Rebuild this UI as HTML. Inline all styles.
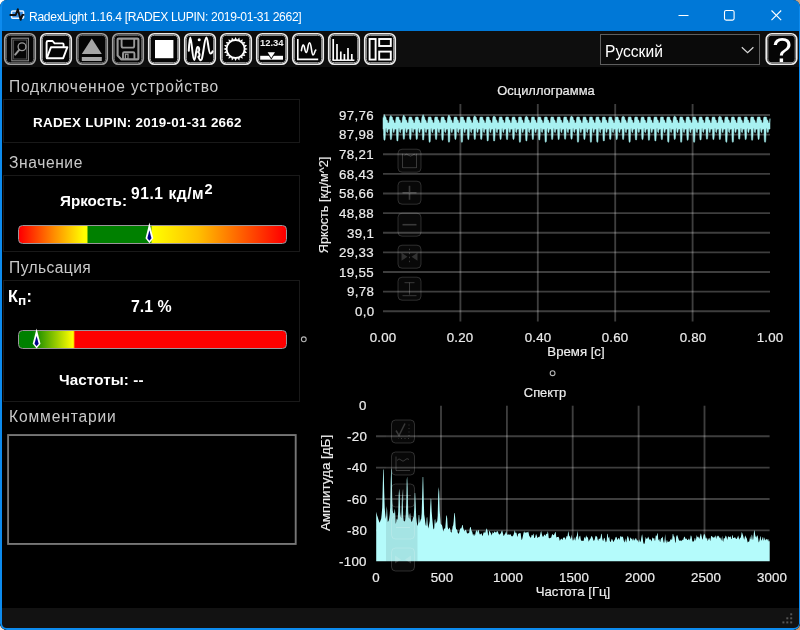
<!DOCTYPE html>
<html><head><meta charset="utf-8"><title>RadexLight</title>
<style>
html,body{margin:0;padding:0;background:#fff;}
body{width:800px;height:630px;overflow:hidden;position:relative;font-family:"Liberation Sans",sans-serif;}
#win{position:absolute;left:0;top:0;width:800px;height:630px;box-sizing:border-box;background:#000;border-radius:7px 7px 7px 7px;overflow:hidden;}
#win:after{content:"";position:absolute;left:0;top:0;right:0;bottom:0;border:solid #0d8bee;border-width:0 1px 2px 2px;border-radius:7px 7px 6.5px 6.5px;pointer-events:none;box-sizing:border-box;}
#title{position:absolute;left:0;top:0;width:800px;height:31px;background:#0078d7;}
#title .t{position:absolute;left:29px;top:10.2px;font-size:12.1px;line-height:14px;color:#fff;white-space:pre;letter-spacing:-0.32px;}
#tool{position:absolute;left:0;top:31px;width:800px;height:36px;background:#0e0e0e;}
#status{position:absolute;left:0;top:608px;width:800px;height:22px;background:#121212;}
.h{position:absolute;left:9px;color:#c9c9c9;font-size:15.6px;line-height:20px;white-space:pre;letter-spacing:0.72px;}
.gb{position:absolute;left:3px;width:297px;box-sizing:border-box;border:1px solid #191919;}
.b{position:absolute;color:#fff;font-weight:bold;white-space:pre;line-height:18px;}
.bar{position:absolute;left:17.6px;width:269.2px;height:19px;box-sizing:border-box;border:1.5px solid #9a959a;border-radius:4.5px;background-origin:border-box;}
#combo{position:absolute;left:600px;top:33.5px;width:159.5px;height:31.5px;box-sizing:border-box;border:1px solid #5e5e5e;background:#0a0a0a;}
#combo span{position:absolute;left:3.6px;top:8.2px;font-size:15.6px;line-height:18px;color:#fff;}
#help{position:absolute;left:765.5px;top:33px;width:32px;height:32px;}
#ta{display:none}
.cl,.ct,.rot,.h,.b,#title .t,#combo span{will-change:transform;}
.cl{position:absolute;-webkit-text-stroke:0.2px #ececec;color:#ececec;font-size:13.3px;line-height:16px;white-space:pre;letter-spacing:0.1px;}
.yl{text-align:right;}
.xl{width:60px;text-align:center;}
.ct{position:absolute;-webkit-text-stroke:0.2px #ececec;color:#ececec;font-size:12.9px;line-height:16px;white-space:pre;width:200px;text-align:center;}
.rot{position:absolute;-webkit-text-stroke:0.2px #ececec;color:#ececec;font-size:13px;line-height:16px;white-space:pre;width:200px;height:16px;text-align:center;transform:rotate(-90deg);transform-origin:center center;}
svg{position:absolute;left:0;top:0;}
</style></head><body>
<div style="position:absolute;right:0;top:0;width:8px;height:8px;background:#c9a585"></div><div style="position:absolute;right:0;bottom:0;width:8px;height:8px;background:#c99a70"></div><div style="position:absolute;left:0;bottom:0;width:8px;height:8px;background:#f3e6da"></div>
<div id="win">
<div id="title"><div class="t">RadexLight 1.16.4 [RADEX LUPIN: 2019-01-31 2662]</div></div>
<div id="tool"></div>
<div id="status"></div>

<div class="h" style="top:76.6px;letter-spacing:0.78px">Подключенное устройство</div>
<div class="gb" style="top:99px;height:44px"></div>
<div class="b" style="left:33px;top:113.6px;font-size:13.4px;letter-spacing:0.28px">RADEX LUPIN: 2019-01-31 2662</div>

<div class="h" style="top:152.6px;letter-spacing:0.6px">Значение</div>
<div class="gb" style="top:175px;height:77px"></div>
<div class="b" style="left:60px;top:191.5px;font-size:15.2px">Яркость:</div>
<div class="b" style="left:131px;top:184.5px;font-size:15.6px;letter-spacing:0.55px">91.1 кд/м<span style="font-size:14.6px;position:relative;top:-4.6px;letter-spacing:0;margin-left:0.4px">2</span></div>
<div class="bar" style="top:224.6px;background-image:linear-gradient(90deg,#ff0000 2px,#ff8c00 36px,#ffff00 66px,#ffff00 68.5px,#008000 70.5px,#008000 132px,#ffff00 134.5px,#ffc000 180px,#ff0000 266px)"></div>

<div class="h" style="top:258px;letter-spacing:0.42px">Пульсация</div>
<div class="gb" style="top:280px;height:122px"></div>
<div class="b" style="left:8px;top:287.2px;font-size:16.2px">К<span style="font-size:13.6px;position:relative;top:3px;letter-spacing:0.3px">п</span>:</div>
<div class="b" style="left:131px;top:297.8px;font-size:15.9px">7.1 %</div>
<div class="bar" style="top:330px;background-image:linear-gradient(90deg,#008000 0px,#008000 14px,#ffff00 54.5px,#ffe000 55.5px,#ff0000 57px,#ff0000 100%)"></div>
<div class="b" style="left:59px;top:371px;font-size:15.2px;letter-spacing:0.1px">Частоты: --</div>

<div class="h" style="top:407px;letter-spacing:0.86px">Комментарии</div>
<div id="ta"></div>

<div id="combo"><span>Русский</span></div>

<div class="ct" style="left:445.7px;top:82.5px">Осциллограмма</div>
<div class="cl yl" style="top:107.8px;right:425.7px;letter-spacing:0.32px">97,76</div>
<div class="cl yl" style="top:127.4px;right:425.7px;letter-spacing:0.32px">87,98</div>
<div class="cl yl" style="top:147.0px;right:425.7px;letter-spacing:0.32px">78,21</div>
<div class="cl yl" style="top:166.7px;right:425.7px;letter-spacing:0.32px">68,43</div>
<div class="cl yl" style="top:186.3px;right:425.7px;letter-spacing:0.32px">58,66</div>
<div class="cl yl" style="top:205.9px;right:425.7px;letter-spacing:0.32px">48,88</div>
<div class="cl yl" style="top:225.5px;right:425.7px;letter-spacing:0.32px">39,1</div>
<div class="cl yl" style="top:245.1px;right:425.7px;letter-spacing:0.32px">29,33</div>
<div class="cl yl" style="top:264.8px;right:425.7px;letter-spacing:0.32px">19,55</div>
<div class="cl yl" style="top:284.4px;right:425.7px;letter-spacing:0.32px">9,78</div>
<div class="cl yl" style="top:304.0px;right:425.7px;letter-spacing:0.32px">0,0</div>
<div class="cl xl" style="top:330px;left:353.0px">0.00</div>
<div class="cl xl" style="top:330px;left:430.4px">0.20</div>
<div class="cl xl" style="top:330px;left:507.8px">0.40</div>
<div class="cl xl" style="top:330px;left:585.2px">0.60</div>
<div class="cl xl" style="top:330px;left:662.6px">0.80</div>
<div class="cl xl" style="top:330px;left:740.0px">1.00</div>
<div class="ct" style="left:475.6px;top:343.5px;font-size:13.2px">Время [с]</div>
<div class="rot" style="left:224px;top:197px;font-size:12.7px">Яркость [кд/м^2]</div>

<div class="ct" style="left:445.2px;top:384.5px">Спектр</div>
<div class="cl yl" style="top:398.2px;right:433.0px;letter-spacing:0.3px">0</div>
<div class="cl yl" style="top:429.3px;right:433.0px;letter-spacing:0.3px">-20</div>
<div class="cl yl" style="top:460.4px;right:433.0px;letter-spacing:0.3px">-40</div>
<div class="cl yl" style="top:491.5px;right:433.0px;letter-spacing:0.3px">-60</div>
<div class="cl yl" style="top:522.6px;right:433.0px;letter-spacing:0.3px">-80</div>
<div class="cl yl" style="top:553.7px;right:433.0px;letter-spacing:0.3px">-100</div>
<div class="cl xl" style="top:570px;left:345.5px">0</div>
<div class="cl xl" style="top:570px;left:412.3px">500</div>
<div class="cl xl" style="top:570px;left:478.2px">1000</div>
<div class="cl xl" style="top:570px;left:544.0px">1500</div>
<div class="cl xl" style="top:570px;left:609.9px">2000</div>
<div class="cl xl" style="top:570px;left:675.8px">2500</div>
<div class="cl xl" style="top:570px;left:741.6px">3000</div>
<div class="ct" style="left:473px;top:584px;font-size:13.2px">Частота [Гц]</div>
<div class="rot" style="left:225.7px;top:475px;font-size:13.4px">Амплитуда [дБ]</div>

<svg width="800" height="630" viewBox="0 0 800 630">
<!-- title icon -->
<g>
<rect x="11.6" y="11" width="12" height="7.2" rx="1" fill="#3a8de0" stroke="#eaf3ff" stroke-width="1.5"/>
<path d="M9.6 15 H15.7 L17.8 9.2 L20.6 19.8 L22.4 14.9 H24.4" fill="none" stroke="#101010" stroke-width="1.9" stroke-linejoin="round"/>
</g>
<!-- caption buttons -->
<line x1="678.5" x2="688.5" y1="15.5" y2="15.5" stroke="#fff" stroke-width="1"/>
<rect x="724.5" y="10.5" width="9.6" height="9.6" rx="1.6" fill="none" stroke="#fff" stroke-width="1.1"/>
<path d="M771.5 10.5 L781.2 20.2 M781.2 10.5 L771.5 20.2" stroke="#fff" stroke-width="1.1"/>
<!-- toolbar buttons -->
<g transform="translate(4,33)">
<rect x="0.75" y="0.75" width="30.5" height="30.5" rx="5.6" fill="#050505" stroke="#a2a2a2" stroke-width="1.65"/>
<rect x="2.3" y="2.3" width="27.4" height="27.4" rx="4.1" fill="none" stroke="#6c6c6c" stroke-width="1.0"/>
<rect x="7.8" y="5.2" width="16.6" height="22.6" fill="none" stroke="#8a8a8a" stroke-width="1.1"/>
<rect x="9.6" y="7" width="13" height="19" fill="none" stroke="#5a5a5a" stroke-width="0.9"/>
<circle cx="18" cy="13.8" r="3.9" fill="none" stroke="#9a9a9a" stroke-width="1.3"/>
<line x1="15.2" y1="16.8" x2="11.2" y2="21.6" stroke="#9a9a9a" stroke-width="2" stroke-linecap="round"/>
</g>
<g transform="translate(40,33)">
<rect x="0.75" y="0.75" width="30.5" height="30.5" rx="5.6" fill="#050505" stroke="#ececec" stroke-width="1.65"/>
<rect x="2.3" y="2.3" width="27.4" height="27.4" rx="4.1" fill="none" stroke="#a8a8a8" stroke-width="1.0"/>
<path d="M6.6 24.8 V9.4 Q6.6 8 8 8 H12.6 L14.6 10.4 H22.6 Q23.6 10.4 23.6 11.6 V14" fill="none" stroke="#fff" stroke-width="1.9" stroke-linejoin="round"/>
<path d="M6.8 25.2 L11 14.2 H27.4 L23.2 25.2 Z" fill="none" stroke="#fff" stroke-width="1.9" stroke-linejoin="round"/>
</g>
<g transform="translate(76,33)">
<rect x="0.75" y="0.75" width="30.5" height="30.5" rx="5.6" fill="#050505" stroke="#a2a2a2" stroke-width="1.65"/>
<rect x="2.3" y="2.3" width="27.4" height="27.4" rx="4.1" fill="none" stroke="#6c6c6c" stroke-width="1.0"/>
<path d="M15.8 5.6 L25.8 21 H5.8 Z" fill="#a6a6a6"/><rect x="5.8" y="24" width="20" height="4" fill="#a6a6a6"/>
</g>
<g transform="translate(112,33)">
<rect x="0.75" y="0.75" width="30.5" height="30.5" rx="5.6" fill="#050505" stroke="#a2a2a2" stroke-width="1.65"/>
<rect x="2.3" y="2.3" width="27.4" height="27.4" rx="4.1" fill="none" stroke="#6c6c6c" stroke-width="1.0"/>
<path d="M6.6 5.6 H25.4 Q26.4 5.6 26.4 6.6 V25.4 Q26.4 26.4 25.4 26.4 H9.4 L5.6 22.6 V6.6 Q5.6 5.6 6.6 5.6 Z" fill="none" stroke="#989898" stroke-width="2.1" stroke-linejoin="round"/>
<path d="M9.6 5.8 V13 Q9.6 14.6 11.2 14.6 H20.6 Q22.2 14.6 22.2 13 V5.8" fill="none" stroke="#989898" stroke-width="1.9"/>
<path d="M11 26.2 V20.4 Q11 19.2 12.2 19.2 H21.2 Q22.4 19.2 22.4 20.4 V26.2" fill="none" stroke="#989898" stroke-width="1.9"/>
<rect x="13.4" y="21.2" width="2.6" height="4.6" fill="none" stroke="#989898" stroke-width="1.2"/>
</g>
<g transform="translate(148,33)">
<rect x="0.75" y="0.75" width="30.5" height="30.5" rx="5.6" fill="#050505" stroke="#ececec" stroke-width="1.65"/>
<rect x="2.3" y="2.3" width="27.4" height="27.4" rx="4.1" fill="none" stroke="#a8a8a8" stroke-width="1.0"/>
<rect x="7" y="7" width="18.4" height="18.2" fill="#fff"/>
</g>
<g transform="translate(184,33)">
<rect x="0.75" y="0.75" width="30.5" height="30.5" rx="5.6" fill="#050505" stroke="#ececec" stroke-width="1.65"/>
<rect x="2.3" y="2.3" width="27.4" height="27.4" rx="4.1" fill="none" stroke="#a8a8a8" stroke-width="1.0"/>
<path d="M4.8 17.8 C5.2 9 5.7 4.4 6.3 4.4 C7.6 4.4 8.4 27 10.3 27 C11.6 27 12 15.5 13.4 14.2 C14.6 13.4 15.6 15.6 15 17.6 C14.6 18.8 13.8 19 14.4 19.4 C16 20 15.8 23.4 14.4 24.4 M14.4 23.6 C15.4 27.5 17 28 17.8 26 C19.4 21 20.6 4.6 22.4 4.6 C24 4.6 24.4 20.6 26.4 20.6 C27.4 20.6 28.2 19.6 28.6 18.4" fill="none" stroke="#fff" stroke-width="2" stroke-linecap="round" stroke-linejoin="round"/>
<circle cx="15.2" cy="6.8" r="1.5" fill="#fff"/>
</g>
<g transform="translate(220,33)">
<rect x="0.75" y="0.75" width="30.5" height="30.5" rx="5.6" fill="#050505" stroke="#ececec" stroke-width="1.65"/>
<rect x="2.3" y="2.3" width="27.4" height="27.4" rx="4.1" fill="none" stroke="#a8a8a8" stroke-width="1.0"/>
<circle cx="15.6" cy="16" r="9" fill="none" stroke="#fff" stroke-width="1.9"/><path d="M25.22 14.74 L27.70 16.00 L25.22 17.26Z M25.14 17.78 L27.11 19.74 L24.36 20.17Z M24.12 20.64 L25.39 23.11 L22.64 22.67Z M22.27 23.04 L22.71 25.79 L20.24 24.52Z M19.77 24.76 L19.34 27.51 L17.38 25.54Z M16.86 25.62 L15.60 28.10 L14.34 25.62Z M13.82 25.54 L11.86 27.51 L11.43 24.76Z M10.96 24.52 L8.49 25.79 L8.93 23.04Z M8.56 22.67 L5.81 23.11 L7.08 20.64Z M6.84 20.17 L4.09 19.74 L6.06 17.78Z M5.98 17.26 L3.50 16.00 L5.98 14.74Z M6.06 14.22 L4.09 12.26 L6.84 11.83Z M7.08 11.36 L5.81 8.89 L8.56 9.33Z M8.93 8.96 L8.49 6.21 L10.96 7.48Z M11.43 7.24 L11.86 4.49 L13.82 6.46Z M14.34 6.38 L15.60 3.90 L16.86 6.38Z M17.38 6.46 L19.34 4.49 L19.77 7.24Z M20.24 7.48 L22.71 6.21 L22.27 8.96Z M22.64 9.33 L25.39 8.89 L24.12 11.36Z M24.36 11.83 L27.11 12.26 L25.14 14.22Z" fill="#fff"/>
</g>
<g transform="translate(256,33)">
<rect x="0.75" y="0.75" width="30.5" height="30.5" rx="5.6" fill="#050505" stroke="#ececec" stroke-width="1.65"/>
<rect x="2.3" y="2.3" width="27.4" height="27.4" rx="4.1" fill="none" stroke="#a8a8a8" stroke-width="1.0"/>
<text x="15.8" y="12.8" font-family="Liberation Sans, sans-serif" font-weight="bold" font-size="9.3" fill="#f2f2f2" text-anchor="middle" textLength="23.6" lengthAdjust="spacingAndGlyphs">12.34</text>
<rect x="4.2" y="22.8" width="22.8" height="3.9" fill="#fff"/>
<path d="M10 18.4 H20.6 L15.3 26.6 Z" fill="#050505"/>
<path d="M11.6 19.3 H19 L15.3 25 Z" fill="#fff"/>
</g>
<g transform="translate(292,33)">
<rect x="0.75" y="0.75" width="30.5" height="30.5" rx="5.6" fill="#050505" stroke="#ececec" stroke-width="1.65"/>
<rect x="2.3" y="2.3" width="27.4" height="27.4" rx="4.1" fill="none" stroke="#a8a8a8" stroke-width="1.0"/>
<path d="M5.8 6 V26.4 H26.2" fill="none" stroke="#fff" stroke-width="1.6"/>
<path d="M9.4 17.6 C10.2 12 11.4 10.6 12.2 13.4 C13 16.4 13.2 19.6 14.4 19.4 C15.8 19 15.8 10 17.6 9.8 C19.4 9.8 19.4 21.6 21 22 C22.4 22.2 22.6 17.6 23.8 17" fill="none" stroke="#fff" stroke-width="1.6" stroke-linecap="round"/>
</g>
<g transform="translate(328,33)">
<rect x="0.75" y="0.75" width="30.5" height="30.5" rx="5.6" fill="#050505" stroke="#ececec" stroke-width="1.65"/>
<rect x="2.3" y="2.3" width="27.4" height="27.4" rx="4.1" fill="none" stroke="#a8a8a8" stroke-width="1.0"/>
<line x1="5.2" x2="5.2" y1="6" y2="27" stroke="#fff" stroke-width="1.7"/><line x1="9.0" x2="9.0" y1="11" y2="27" stroke="#fff" stroke-width="1.7"/><line x1="12.8" x2="12.8" y1="18.5" y2="27" stroke="#fff" stroke-width="1.7"/><line x1="16.4" x2="16.4" y1="21" y2="27" stroke="#fff" stroke-width="1.7"/><line x1="20.0" x2="20.0" y1="15" y2="27" stroke="#fff" stroke-width="1.7"/><line x1="23.8" x2="23.8" y1="21" y2="27" stroke="#fff" stroke-width="1.7"/><line x1="4.4" x2="26.4" y1="27.2" y2="27.2" stroke="#fff" stroke-width="1.5"/>
</g>
<g transform="translate(364,33)">
<rect x="0.75" y="0.75" width="30.5" height="30.5" rx="5.6" fill="#050505" stroke="#ececec" stroke-width="1.65"/>
<rect x="2.3" y="2.3" width="27.4" height="27.4" rx="4.1" fill="none" stroke="#a8a8a8" stroke-width="1.0"/>
<rect x="5.6" y="6" width="6" height="20.6" fill="none" stroke="#fff" stroke-width="1.9"/>
<rect x="15.2" y="6" width="11.6" height="7" fill="none" stroke="#fff" stroke-width="1.9"/>
<rect x="15.2" y="18.6" width="11.6" height="8" fill="none" stroke="#fff" stroke-width="1.9"/>
</g>
<!-- combobox chevron -->
<path d="M741.8 47.2 L747.6 52.6 L753.4 47.2" fill="none" stroke="#d8d8d8" stroke-width="1.2"/>
<!-- help -->
<g transform="translate(765.5,33)">
<rect x="0.75" y="0.75" width="30.5" height="30.5" rx="5.6" fill="#050505" stroke="#ececec" stroke-width="1.65"/>
<rect x="2.3" y="2.3" width="27.4" height="27.4" rx="4.1" fill="none" stroke="#a0a0a0" stroke-width="1.0"/>
<text x="16.6" y="28.5" font-family="Liberation Sans, sans-serif" font-size="35" fill="#fff" text-anchor="middle">?</text>
</g>
<!-- markers -->
<g id="mk1"><path d="M149.4 222.6 L153.3 238.3 L149.4 243.2 L145.5 238.3 Z" fill="#fff"/><path d="M149.4 230.2 L151.5 238.2 L149.4 240.7 L147.3 238.2 Z" fill="#00008b"/></g>
<g id="mk2"><path d="M36.6 328.4 L40.5 343.8 L36.6 348.6 L32.7 343.8 Z" fill="#fff"/><path d="M36.6 336 L38.7 343.7 L36.6 346.2 L34.5 343.7 Z" fill="#00008b"/></g>
<rect x="8.1" y="435.05" width="287.6" height="108.9" fill="none" stroke="#767676" stroke-width="1.9"/>
<!-- splitter handles -->
<circle cx="303.8" cy="339.3" r="2.4" fill="none" stroke="#b5b5b5" stroke-width="1.1"/>
<circle cx="552.6" cy="373.2" r="2.4" fill="none" stroke="#b5b5b5" stroke-width="1.1"/>
<!-- oscillogram -->
<g stroke="rgba(255,255,255,0.245)" stroke-width="1.85">
<line x1="383" x2="770" y1="115.0" y2="115.0"/>
<line x1="383" x2="770" y1="134.6" y2="134.6"/>
<line x1="383" x2="770" y1="154.2" y2="154.2"/>
<line x1="383" x2="770" y1="173.9" y2="173.9"/>
<line x1="383" x2="770" y1="193.5" y2="193.5"/>
<line x1="383" x2="770" y1="213.1" y2="213.1"/>
<line x1="383" x2="770" y1="232.7" y2="232.7"/>
<line x1="383" x2="770" y1="252.3" y2="252.3"/>
<line x1="383" x2="770" y1="272.0" y2="272.0"/>
<line x1="383" x2="770" y1="291.6" y2="291.6"/>
<line x1="383" x2="770" y1="311.2" y2="311.2"/>
<line x1="460.4" x2="460.4" y1="104" y2="321.5"/>
<line x1="537.8" x2="537.8" y1="104" y2="321.5"/>
<line x1="615.2" x2="615.2" y1="104" y2="321.5"/>
<line x1="692.6" x2="692.6" y1="104" y2="321.5"/>
</g>
<path d="M383.00,118.6 383.25,117.4 383.50,116.9 383.75,116.2 384.00,115.5 384.25,114.9 384.50,114.6 384.75,115.3 385.00,116.0 385.25,116.6 385.50,117.0 385.75,117.0 386.00,117.6 386.25,119.2 386.50,119.9 386.75,120.0 387.00,120.2 387.25,120.3 387.50,121.1 387.75,122.8 388.00,122.9 388.25,122.9 388.50,122.9 388.75,122.9 389.00,122.9 389.25,120.5 389.50,118.4 389.75,117.1 390.00,116.8 390.25,116.4 390.50,116.0 390.75,115.6 391.00,115.6 391.25,116.0 391.50,116.4 391.75,116.9 392.00,117.0 392.25,117.0 392.50,117.9 392.75,119.5 393.00,119.9 393.25,120.1 393.50,120.2 393.75,120.4 394.00,121.5 394.25,122.9 394.50,122.9 394.75,122.9 395.00,122.9 395.25,122.9 395.50,122.4 395.75,120.0 396.00,118.1 396.25,117.0 396.50,117.0 396.75,117.0 397.00,117.0 397.25,117.0 397.50,117.0 397.75,117.0 398.00,117.0 398.25,117.0 398.50,117.0 398.75,117.0 399.00,118.2 399.25,119.8 399.50,119.9 399.75,120.1 400.00,120.2 400.25,120.4 400.50,121.8 400.75,122.9 401.00,122.9 401.25,122.9 401.50,122.9 401.75,122.9 402.00,121.9 402.25,119.6 402.50,117.9 402.75,117.0 403.00,116.6 403.25,116.1 403.50,115.6 403.75,115.0 404.00,115.5 404.25,116.0 404.50,116.5 404.75,117.0 405.00,117.0 405.25,117.0 405.50,118.5 405.75,119.8 406.00,120.0 406.25,120.1 406.50,120.3 406.75,120.5 407.00,122.1 407.25,122.9 407.50,122.9 407.75,122.9 408.00,122.9 408.25,122.9 408.50,121.5 408.75,119.1 409.00,117.6 409.25,117.0 409.50,117.0 409.75,117.0 410.00,117.0 410.25,117.0 410.50,117.0 410.75,117.0 411.00,117.0 411.25,117.0 411.50,117.0 411.75,117.3 412.00,118.8 412.25,119.9 412.50,120.0 412.75,120.1 413.00,120.3 413.25,120.8 413.50,122.4 413.75,122.9 414.00,122.9 414.25,122.9 414.50,122.9 414.75,122.9 415.00,121.0 415.25,118.6 415.50,117.4 415.75,117.0 416.00,117.0 416.25,117.0 416.50,117.0 416.75,117.0 417.00,117.0 417.25,117.0 417.50,117.0 417.75,117.0 418.00,117.0 418.25,117.6 418.50,119.2 418.75,119.9 419.00,120.0 419.25,120.2 419.50,120.3 419.75,121.1 420.00,122.8 420.25,122.9 420.50,122.9 420.75,122.9 421.00,122.9 421.25,122.9 421.50,120.5 421.75,118.4 422.00,117.1 422.25,116.7 422.50,116.1 422.75,115.4 423.00,114.7 423.25,114.8 423.50,115.4 423.75,116.1 424.00,116.8 424.25,117.0 424.50,117.0 424.75,117.9 425.00,119.5 425.25,119.9 425.50,120.1 425.75,120.2 426.00,120.4 426.25,121.5 426.50,122.9 426.75,122.9 427.00,122.9 427.25,122.9 427.50,122.9 427.75,122.4 428.00,120.0 428.25,118.1 428.50,117.0 428.75,117.0 429.00,117.0 429.25,117.0 429.50,117.0 429.75,117.0 430.00,117.0 430.25,117.0 430.50,117.0 430.75,117.0 431.00,117.0 431.25,118.2 431.50,119.8 431.75,119.9 432.00,120.1 432.25,120.2 432.50,120.4 432.75,121.8 433.00,122.9 433.25,122.9 433.50,122.9 433.75,122.9 434.00,122.9 434.25,121.9 434.50,119.6 434.75,117.9 435.00,117.0 435.25,117.0 435.50,117.0 435.75,117.0 436.00,117.0 436.25,117.0 436.50,117.0 436.75,117.0 437.00,117.0 437.25,117.0 437.50,117.0 437.75,118.5 438.00,119.8 438.25,120.0 438.50,120.1 438.75,120.3 439.00,120.5 439.25,122.1 439.50,122.9 439.75,122.9 440.00,122.9 440.25,122.9 440.50,122.9 440.75,121.5 441.00,119.1 441.25,117.6 441.50,117.0 441.75,117.0 442.00,117.0 442.25,117.0 442.50,117.0 442.75,117.0 443.00,117.0 443.25,117.0 443.50,117.0 443.75,117.0 444.00,117.3 444.25,118.8 444.50,119.9 444.75,120.0 445.00,120.1 445.25,120.3 445.50,120.8 445.75,122.4 446.00,122.9 446.25,122.9 446.50,122.9 446.75,122.9 447.00,122.9 447.25,121.0 447.50,118.6 447.75,117.4 448.00,116.9 448.25,116.3 448.50,115.8 448.75,115.2 449.00,115.0 449.25,115.6 449.50,116.1 449.75,116.7 450.00,117.0 450.25,117.0 450.50,117.6 450.75,119.2 451.00,119.9 451.25,120.0 451.50,120.2 451.75,120.3 452.00,121.1 452.25,122.8 452.50,122.9 452.75,122.9 453.00,122.9 453.25,122.9 453.50,122.9 453.75,120.5 454.00,118.4 454.25,117.1 454.50,117.0 454.75,117.0 455.00,117.0 455.25,117.0 455.50,117.0 455.75,117.0 456.00,117.0 456.25,117.0 456.50,117.0 456.75,117.0 457.00,117.9 457.25,119.5 457.50,119.9 457.75,120.1 458.00,120.2 458.25,120.4 458.50,121.5 458.75,122.9 459.00,122.9 459.25,122.9 459.50,122.9 459.75,122.9 460.00,122.4 460.25,120.0 460.50,118.1 460.75,117.0 461.00,117.0 461.25,117.0 461.50,117.0 461.75,117.0 462.00,117.0 462.25,117.0 462.50,117.0 462.75,117.0 463.00,117.0 463.25,117.0 463.50,118.2 463.75,119.8 464.00,119.9 464.25,120.1 464.50,120.2 464.75,120.4 465.00,121.8 465.25,122.9 465.50,122.9 465.75,122.9 466.00,122.9 466.25,122.9 466.50,121.9 466.75,119.6 467.00,117.9 467.25,117.0 467.50,117.0 467.75,117.0 468.00,117.0 468.25,117.0 468.50,117.0 468.75,117.0 469.00,117.0 469.25,117.0 469.50,117.0 469.75,117.0 470.00,118.5 470.25,119.8 470.50,120.0 470.75,120.1 471.00,120.3 471.25,120.5 471.50,122.1 471.75,122.9 472.00,122.9 472.25,122.9 472.50,122.9 472.75,122.9 473.00,121.5 473.25,119.1 473.50,117.6 473.75,117.0 474.00,116.7 474.25,116.4 474.50,116.1 474.75,115.8 475.00,116.1 475.25,116.5 475.50,116.8 475.75,117.0 476.00,117.0 476.25,117.3 476.50,118.8 476.75,119.9 477.00,120.0 477.25,120.1 477.50,120.3 477.75,120.8 478.00,122.4 478.25,122.9 478.50,122.9 478.75,122.9 479.00,122.9 479.25,122.9 479.50,121.0 479.75,118.6 480.00,117.4 480.25,117.0 480.50,117.0 480.75,117.0 481.00,117.0 481.25,117.0 481.50,117.0 481.75,117.0 482.00,117.0 482.25,117.0 482.50,117.0 482.75,117.6 483.00,119.2 483.25,119.9 483.50,120.0 483.75,120.2 484.00,120.3 484.25,121.1 484.50,122.8 484.75,122.9 485.00,122.9 485.25,122.9 485.50,122.9 485.75,122.9 486.00,120.5 486.25,118.4 486.50,117.1 486.75,117.0 487.00,117.0 487.25,117.0 487.50,117.0 487.75,117.0 488.00,117.0 488.25,117.0 488.50,117.0 488.75,117.0 489.00,117.0 489.25,117.9 489.50,119.5 489.75,119.9 490.00,120.1 490.25,120.2 490.50,120.4 490.75,121.5 491.00,122.9 491.25,122.9 491.50,122.9 491.75,122.9 492.00,122.9 492.25,122.4 492.50,120.0 492.75,118.1 493.00,117.0 493.25,116.8 493.50,116.6 493.75,116.3 494.00,116.1 494.25,116.2 494.50,116.4 494.75,116.7 495.00,117.0 495.25,117.0 495.50,117.0 495.75,118.2 496.00,119.8 496.25,119.9 496.50,120.1 496.75,120.2 497.00,120.4 497.25,121.8 497.50,122.9 497.75,122.9 498.00,122.9 498.25,122.9 498.50,122.9 498.75,121.9 499.00,119.6 499.25,117.9 499.50,117.0 499.75,117.0 500.00,117.0 500.25,117.0 500.50,117.0 500.75,117.0 501.00,117.0 501.25,117.0 501.50,117.0 501.75,117.0 502.00,117.0 502.25,118.5 502.50,119.8 502.75,120.0 503.00,120.1 503.25,120.3 503.50,120.5 503.75,122.1 504.00,122.9 504.25,122.9 504.50,122.9 504.75,122.9 505.00,122.9 505.25,121.5 505.50,119.1 505.75,117.6 506.00,117.0 506.25,117.0 506.50,117.0 506.75,117.0 507.00,117.0 507.25,117.0 507.50,117.0 507.75,117.0 508.00,117.0 508.25,117.0 508.50,117.3 508.75,118.8 509.00,119.9 509.25,120.0 509.50,120.1 509.75,120.3 510.00,120.8 510.25,122.4 510.50,122.9 510.75,122.9 511.00,122.9 511.25,122.9 511.50,122.9 511.75,121.0 512.00,118.6 512.25,117.4 512.50,117.0 512.75,117.0 513.00,117.0 513.25,117.0 513.50,117.0 513.75,117.0 514.00,117.0 514.25,117.0 514.50,117.0 514.75,117.0 515.00,117.6 515.25,119.2 515.50,119.9 515.75,120.0 516.00,120.2 516.25,120.3 516.50,121.1 516.75,122.8 517.00,122.9 517.25,122.9 517.50,122.9 517.75,122.9 518.00,122.9 518.25,120.5 518.50,118.4 518.75,117.1 519.00,117.0 519.25,117.0 519.50,117.0 519.75,117.0 520.00,117.0 520.25,117.0 520.50,117.0 520.75,117.0 521.00,117.0 521.25,117.0 521.50,117.9 521.75,119.5 522.00,119.9 522.25,120.1 522.50,120.2 522.75,120.3 523.00,121.5 523.25,122.9 523.50,122.9 523.75,122.9 524.00,122.9 524.25,122.9 524.50,122.4 524.75,120.0 525.00,118.1 525.25,117.0 525.50,116.9 525.75,116.7 526.00,116.5 526.25,116.3 526.50,116.3 526.75,116.6 527.00,116.8 527.25,117.0 527.50,117.0 527.75,117.0 528.00,118.2 528.25,119.8 528.50,119.9 528.75,120.1 529.00,120.2 529.25,120.4 529.50,121.8 529.75,122.9 530.00,122.9 530.25,122.9 530.50,122.9 530.75,122.9 531.00,121.9 531.25,119.6 531.50,117.9 531.75,117.0 532.00,117.0 532.25,117.0 532.50,117.0 532.75,117.0 533.00,117.0 533.25,117.0 533.50,117.0 533.75,117.0 534.00,117.0 534.25,117.0 534.50,118.5 534.75,119.8 535.00,120.0 535.25,120.1 535.50,120.3 535.75,120.5 536.00,122.1 536.25,122.9 536.50,122.9 536.75,122.9 537.00,122.9 537.25,122.9 537.50,121.5 537.75,119.1 538.00,117.6 538.25,117.0 538.50,117.0 538.75,117.0 539.00,117.0 539.25,117.0 539.50,117.0 539.75,117.0 540.00,117.0 540.25,117.0 540.50,117.0 540.75,117.3 541.00,118.8 541.25,119.9 541.50,120.0 541.75,120.1 542.00,120.3 542.25,120.8 542.50,122.4 542.75,122.9 543.00,122.9 543.25,122.9 543.50,122.9 543.75,122.9 544.00,121.0 544.25,118.6 544.50,117.4 544.75,117.0 545.00,117.0 545.25,117.0 545.50,117.0 545.75,117.0 546.00,117.0 546.25,117.0 546.50,117.0 546.75,117.0 547.00,117.0 547.25,117.6 547.50,119.2 547.75,119.9 548.00,120.0 548.25,120.2 548.50,120.3 548.75,121.1 549.00,122.8 549.25,122.9 549.50,122.9 549.75,122.9 550.00,122.9 550.25,122.9 550.50,120.5 550.75,118.4 551.00,117.1 551.25,117.0 551.50,117.0 551.75,117.0 552.00,117.0 552.25,117.0 552.50,117.0 552.75,117.0 553.00,117.0 553.25,117.0 553.50,117.0 553.75,117.9 554.00,119.5 554.25,119.9 554.50,120.1 554.75,120.2 555.00,120.3 555.25,121.5 555.50,122.9 555.75,122.9 556.00,122.9 556.25,122.9 556.50,122.9 556.75,122.4 557.00,120.0 557.25,118.1 557.50,117.0 557.75,117.0 558.00,117.0 558.25,117.0 558.50,117.0 558.75,117.0 559.00,117.0 559.25,117.0 559.50,117.0 559.75,117.0 560.00,117.0 560.25,118.2 560.50,119.8 560.75,119.9 561.00,120.1 561.25,120.2 561.50,120.4 561.75,121.8 562.00,122.9 562.25,122.9 562.50,122.9 562.75,122.9 563.00,122.9 563.25,121.9 563.50,119.6 563.75,117.9 564.00,117.0 564.25,117.0 564.50,117.0 564.75,117.0 565.00,117.0 565.25,117.0 565.50,117.0 565.75,117.0 566.00,117.0 566.25,117.0 566.50,117.0 566.75,118.5 567.00,119.8 567.25,120.0 567.50,120.1 567.75,120.3 568.00,120.5 568.25,122.1 568.50,122.9 568.75,122.9 569.00,122.9 569.25,122.9 569.50,122.9 569.75,121.5 570.00,119.1 570.25,117.6 570.50,117.0 570.75,116.8 571.00,116.5 571.25,116.3 571.50,116.1 571.75,116.4 572.00,116.6 572.25,116.8 572.50,117.0 572.75,117.0 573.00,117.3 573.25,118.8 573.50,119.9 573.75,120.0 574.00,120.1 574.25,120.3 574.50,120.8 574.75,122.4 575.00,122.9 575.25,122.9 575.50,122.9 575.75,122.9 576.00,122.9 576.25,121.0 576.50,118.6 576.75,117.4 577.00,117.0 577.25,117.0 577.50,117.0 577.75,117.0 578.00,117.0 578.25,117.0 578.50,117.0 578.75,117.0 579.00,117.0 579.25,117.0 579.50,117.6 579.75,119.2 580.00,119.9 580.25,120.0 580.50,120.2 580.75,120.3 581.00,121.1 581.25,122.8 581.50,122.9 581.75,122.9 582.00,122.9 582.25,122.9 582.50,122.9 582.75,120.5 583.00,118.4 583.25,117.1 583.50,117.0 583.75,117.0 584.00,117.0 584.25,117.0 584.50,117.0 584.75,117.0 585.00,117.0 585.25,117.0 585.50,117.0 585.75,117.0 586.00,117.9 586.25,119.5 586.50,119.9 586.75,120.1 587.00,120.2 587.25,120.3 587.50,121.5 587.75,122.9 588.00,122.9 588.25,122.9 588.50,122.9 588.75,122.9 589.00,122.4 589.25,120.0 589.50,118.1 589.75,117.0 590.00,117.0 590.25,117.0 590.50,117.0 590.75,117.0 591.00,117.0 591.25,117.0 591.50,117.0 591.75,117.0 592.00,117.0 592.25,117.0 592.50,118.2 592.75,119.8 593.00,119.9 593.25,120.1 593.50,120.2 593.75,120.4 594.00,121.8 594.25,122.9 594.50,122.9 594.75,122.9 595.00,122.9 595.25,122.9 595.50,121.9 595.75,119.6 596.00,117.9 596.25,117.0 596.50,117.0 596.75,117.0 597.00,117.0 597.25,117.0 597.50,117.0 597.75,117.0 598.00,117.0 598.25,117.0 598.50,117.0 598.75,117.0 599.00,118.5 599.25,119.8 599.50,120.0 599.75,120.1 600.00,120.3 600.25,120.5 600.50,122.1 600.75,122.9 601.00,122.9 601.25,122.9 601.50,122.9 601.75,122.9 602.00,121.5 602.25,119.1 602.50,117.6 602.75,117.0 603.00,117.0 603.25,117.0 603.50,117.0 603.75,117.0 604.00,117.0 604.25,117.0 604.50,117.0 604.75,117.0 605.00,117.0 605.25,117.3 605.50,118.8 605.75,119.9 606.00,120.0 606.25,120.1 606.50,120.3 606.75,120.8 607.00,122.4 607.25,122.9 607.50,122.9 607.75,122.9 608.00,122.9 608.25,122.9 608.50,121.0 608.75,118.6 609.00,117.4 609.25,117.0 609.50,117.0 609.75,117.0 610.00,117.0 610.25,117.0 610.50,117.0 610.75,117.0 611.00,117.0 611.25,117.0 611.50,117.0 611.75,117.6 612.00,119.2 612.25,119.9 612.50,120.0 612.75,120.2 613.00,120.3 613.25,121.1 613.50,122.8 613.75,122.9 614.00,122.9 614.25,122.9 614.50,122.9 614.75,122.9 615.00,120.5 615.25,118.4 615.50,117.1 615.75,117.0 616.00,117.0 616.25,117.0 616.50,117.0 616.75,117.0 617.00,117.0 617.25,117.0 617.50,117.0 617.75,117.0 618.00,117.0 618.25,117.9 618.50,119.5 618.75,119.9 619.00,120.1 619.25,120.2 619.50,120.3 619.75,121.5 620.00,122.9 620.25,122.9 620.50,122.9 620.75,122.9 621.00,122.9 621.25,122.4 621.50,120.0 621.75,118.1 622.00,117.0 622.25,116.9 622.50,116.7 622.75,116.5 623.00,116.3 623.25,116.3 623.50,116.6 623.75,116.8 624.00,117.0 624.25,117.0 624.50,117.0 624.75,118.2 625.00,119.8 625.25,119.9 625.50,120.1 625.75,120.2 626.00,120.4 626.25,121.8 626.50,122.9 626.75,122.9 627.00,122.9 627.25,122.9 627.50,122.9 627.75,121.9 628.00,119.6 628.25,117.9 628.50,117.0 628.75,117.0 629.00,117.0 629.25,117.0 629.50,117.0 629.75,117.0 630.00,117.0 630.25,117.0 630.50,117.0 630.75,117.0 631.00,117.0 631.25,118.5 631.50,119.8 631.75,120.0 632.00,120.1 632.25,120.3 632.50,120.5 632.75,122.1 633.00,122.9 633.25,122.9 633.50,122.9 633.75,122.9 634.00,122.9 634.25,121.5 634.50,119.1 634.75,117.6 635.00,117.0 635.25,117.0 635.50,117.0 635.75,117.0 636.00,117.0 636.25,117.0 636.50,117.0 636.75,117.0 637.00,117.0 637.25,117.0 637.50,117.3 637.75,118.8 638.00,119.9 638.25,120.0 638.50,120.1 638.75,120.3 639.00,120.8 639.25,122.4 639.50,122.9 639.75,122.9 640.00,122.9 640.25,122.9 640.50,122.9 640.75,121.0 641.00,118.6 641.25,117.4 641.50,117.0 641.75,117.0 642.00,117.0 642.25,117.0 642.50,117.0 642.75,117.0 643.00,117.0 643.25,117.0 643.50,117.0 643.75,117.0 644.00,117.6 644.25,119.2 644.50,119.9 644.75,120.0 645.00,120.2 645.25,120.3 645.50,121.1 645.75,122.8 646.00,122.9 646.25,122.9 646.50,122.9 646.75,122.9 647.00,122.9 647.25,120.5 647.50,118.4 647.75,117.1 648.00,117.0 648.25,117.0 648.50,117.0 648.75,117.0 649.00,117.0 649.25,117.0 649.50,117.0 649.75,117.0 650.00,117.0 650.25,117.0 650.50,117.9 650.75,119.5 651.00,119.9 651.25,120.1 651.50,120.2 651.75,120.3 652.00,121.5 652.25,122.9 652.50,122.9 652.75,122.9 653.00,122.9 653.25,122.9 653.50,122.4 653.75,120.0 654.00,118.1 654.25,117.0 654.50,117.0 654.75,117.0 655.00,117.0 655.25,117.0 655.50,117.0 655.75,117.0 656.00,117.0 656.25,117.0 656.50,117.0 656.75,117.0 657.00,118.2 657.25,119.8 657.50,119.9 657.75,120.1 658.00,120.2 658.25,120.4 658.50,121.8 658.75,122.9 659.00,122.9 659.25,122.9 659.50,122.9 659.75,122.9 660.00,121.9 660.25,119.6 660.50,117.9 660.75,117.0 661.00,117.0 661.25,117.0 661.50,117.0 661.75,117.0 662.00,117.0 662.25,117.0 662.50,117.0 662.75,117.0 663.00,117.0 663.25,117.0 663.50,118.5 663.75,119.8 664.00,120.0 664.25,120.1 664.50,120.3 664.75,120.5 665.00,122.1 665.25,122.9 665.50,122.9 665.75,122.9 666.00,122.9 666.25,122.9 666.50,121.5 666.75,119.1 667.00,117.6 667.25,117.0 667.50,117.0 667.75,117.0 668.00,117.0 668.25,117.0 668.50,117.0 668.75,117.0 669.00,117.0 669.25,117.0 669.50,117.0 669.75,117.3 670.00,118.8 670.25,119.9 670.50,120.0 670.75,120.1 671.00,120.3 671.25,120.8 671.50,122.4 671.75,122.9 672.00,122.9 672.25,122.9 672.50,122.9 672.75,122.9 673.00,121.0 673.25,118.6 673.50,117.4 673.75,116.9 674.00,116.7 674.25,116.4 674.50,116.2 674.75,116.1 675.00,116.3 675.25,116.6 675.50,116.9 675.75,117.0 676.00,117.0 676.25,117.6 676.50,119.2 676.75,119.9 677.00,120.0 677.25,120.2 677.50,120.3 677.75,121.1 678.00,122.8 678.25,122.9 678.50,122.9 678.75,122.9 679.00,122.9 679.25,122.9 679.50,120.5 679.75,118.4 680.00,117.1 680.25,117.0 680.50,117.0 680.75,117.0 681.00,117.0 681.25,117.0 681.50,117.0 681.75,117.0 682.00,117.0 682.25,117.0 682.50,117.0 682.75,117.9 683.00,119.5 683.25,119.9 683.50,120.1 683.75,120.2 684.00,120.3 684.25,121.5 684.50,122.9 684.75,122.9 685.00,122.9 685.25,122.9 685.50,122.9 685.75,122.4 686.00,120.0 686.25,118.1 686.50,117.0 686.75,117.0 687.00,117.0 687.25,117.0 687.50,117.0 687.75,117.0 688.00,117.0 688.25,117.0 688.50,117.0 688.75,117.0 689.00,117.0 689.25,118.2 689.50,119.8 689.75,119.9 690.00,120.1 690.25,120.2 690.50,120.4 690.75,121.8 691.00,122.9 691.25,122.9 691.50,122.9 691.75,122.9 692.00,122.9 692.25,121.9 692.50,119.6 692.75,117.9 693.00,117.0 693.25,117.0 693.50,117.0 693.75,117.0 694.00,117.0 694.25,117.0 694.50,117.0 694.75,117.0 695.00,117.0 695.25,117.0 695.50,117.0 695.75,118.5 696.00,119.8 696.25,120.0 696.50,120.1 696.75,120.3 697.00,120.5 697.25,122.1 697.50,122.9 697.75,122.9 698.00,122.9 698.25,122.9 698.50,122.9 698.75,121.5 699.00,119.1 699.25,117.6 699.50,117.0 699.75,117.0 700.00,117.0 700.25,117.0 700.50,117.0 700.75,117.0 701.00,117.0 701.25,117.0 701.50,117.0 701.75,117.0 702.00,117.3 702.25,118.8 702.50,119.9 702.75,120.0 703.00,120.1 703.25,120.3 703.50,120.8 703.75,122.4 704.00,122.9 704.25,122.9 704.50,122.9 704.75,122.9 705.00,122.9 705.25,121.0 705.50,118.6 705.75,117.4 706.00,117.0 706.25,117.0 706.50,117.0 706.75,117.0 707.00,117.0 707.25,117.0 707.50,117.0 707.75,117.0 708.00,117.0 708.25,117.0 708.50,117.6 708.75,119.2 709.00,119.9 709.25,120.0 709.50,120.2 709.75,120.3 710.00,121.1 710.25,122.8 710.50,122.9 710.75,122.9 711.00,122.9 711.25,122.9 711.50,122.9 711.75,120.5 712.00,118.4 712.25,117.1 712.50,117.0 712.75,117.0 713.00,117.0 713.25,117.0 713.50,117.0 713.75,117.0 714.00,117.0 714.25,117.0 714.50,117.0 714.75,117.0 715.00,117.9 715.25,119.5 715.50,119.9 715.75,120.1 716.00,120.2 716.25,120.3 716.50,121.5 716.75,122.9 717.00,122.9 717.25,122.9 717.50,122.9 717.75,122.9 718.00,122.4 718.25,120.0 718.50,118.1 718.75,117.0 719.00,116.9 719.25,116.7 719.50,116.5 719.75,116.3 720.00,116.4 720.25,116.6 720.50,116.8 720.75,117.0 721.00,117.0 721.25,117.0 721.50,118.2 721.75,119.8 722.00,119.9 722.25,120.1 722.50,120.2 722.75,120.4 723.00,121.8 723.25,122.9 723.50,122.9 723.75,122.9 724.00,122.9 724.25,122.9 724.50,121.9 724.75,119.6 725.00,117.9 725.25,117.0 725.50,117.0 725.75,117.0 726.00,117.0 726.25,117.0 726.50,117.0 726.75,117.0 727.00,117.0 727.25,117.0 727.50,117.0 727.75,117.0 728.00,118.5 728.25,119.8 728.50,120.0 728.75,120.1 729.00,120.3 729.25,120.5 729.50,122.1 729.75,122.9 730.00,122.9 730.25,122.9 730.50,122.9 730.75,122.9 731.00,121.5 731.25,119.1 731.50,117.6 731.75,117.0 732.00,117.0 732.25,117.0 732.50,117.0 732.75,117.0 733.00,117.0 733.25,117.0 733.50,117.0 733.75,117.0 734.00,117.0 734.25,117.3 734.50,118.8 734.75,119.9 735.00,120.0 735.25,120.1 735.50,120.3 735.75,120.8 736.00,122.4 736.25,122.9 736.50,122.9 736.75,122.9 737.00,122.9 737.25,122.9 737.50,121.0 737.75,118.6 738.00,117.4 738.25,117.0 738.50,117.0 738.75,117.0 739.00,117.0 739.25,117.0 739.50,117.0 739.75,117.0 740.00,117.0 740.25,117.0 740.50,117.0 740.75,117.6 741.00,119.2 741.25,119.9 741.50,120.0 741.75,120.2 742.00,120.3 742.25,121.1 742.50,122.8 742.75,122.9 743.00,122.9 743.25,122.9 743.50,122.9 743.75,122.9 744.00,120.5 744.25,118.4 744.50,117.1 744.75,117.0 745.00,117.0 745.25,117.0 745.50,117.0 745.75,117.0 746.00,117.0 746.25,117.0 746.50,117.0 746.75,117.0 747.00,117.0 747.25,117.9 747.50,119.5 747.75,119.9 748.00,120.1 748.25,120.2 748.50,120.3 748.75,121.5 749.00,122.9 749.25,122.9 749.50,122.9 749.75,122.9 750.00,122.9 750.25,122.4 750.50,120.0 750.75,118.1 751.00,117.0 751.25,117.0 751.50,117.0 751.75,117.0 752.00,117.0 752.25,117.0 752.50,117.0 752.75,117.0 753.00,117.0 753.25,117.0 753.50,117.0 753.75,118.2 754.00,119.8 754.25,119.9 754.50,120.1 754.75,120.2 755.00,120.4 755.25,121.8 755.50,122.9 755.75,122.9 756.00,122.9 756.25,122.9 756.50,122.9 756.75,121.9 757.00,119.6 757.25,117.9 757.50,117.0 757.75,117.0 758.00,117.0 758.25,117.0 758.50,117.0 758.75,117.0 759.00,117.0 759.25,117.0 759.50,117.0 759.75,117.0 760.00,117.0 760.25,118.5 760.50,119.8 760.75,120.0 761.00,120.1 761.25,120.3 761.50,120.5 761.75,122.1 762.00,122.9 762.25,122.9 762.50,122.9 762.75,122.9 763.00,122.9 763.25,121.5 763.50,119.1 763.75,117.6 764.00,117.0 764.25,117.0 764.50,117.0 764.75,117.0 765.00,117.0 765.25,117.0 765.50,117.0 765.75,117.0 766.00,117.0 766.25,117.0 766.50,117.3 766.75,118.8 767.00,119.9 767.25,120.0 767.50,120.1 767.75,120.3 768.00,120.8 768.25,122.4 768.50,122.9 768.75,122.9 769.00,122.9 769.25,122.9 769.50,122.9 769.75,121.0 770.00,118.6 770.00,129.0 769.75,129.1 769.50,129.1 769.25,129.2 769.00,129.3 768.75,129.3 768.50,129.6 768.25,132.2 768.00,132.6 767.75,132.4 767.50,132.2 767.25,131.4 767.00,128.4 766.75,128.3 766.50,128.2 766.25,128.9 766.00,133.4 765.75,140.1 765.50,142.1 765.25,142.2 765.00,142.2 764.75,142.2 764.50,141.6 764.25,139.3 764.00,129.6 763.75,129.3 763.50,129.0 763.25,129.1 763.00,129.1 762.75,129.2 762.50,129.3 762.25,129.4 762.00,130.1 761.75,132.7 761.50,132.6 761.25,132.4 761.00,132.1 760.75,130.7 760.50,128.4 760.25,128.3 760.00,128.4 759.75,129.0 759.50,133.5 759.25,137.7 759.00,139.4 758.75,139.4 758.50,139.4 758.25,139.4 758.00,138.4 757.75,135.2 757.50,129.5 757.25,129.2 757.00,129.0 756.75,129.1 756.50,129.2 756.25,129.2 756.00,129.3 755.75,129.4 755.50,130.6 755.25,132.8 755.00,132.5 754.75,132.3 754.50,132.1 754.25,130.0 754.00,128.3 753.75,128.3 753.50,128.5 753.25,129.1 753.00,135.3 752.75,138.9 752.50,140.2 752.25,140.2 752.00,140.2 751.75,140.2 751.50,138.8 751.25,134.3 751.00,129.5 750.75,129.1 750.50,129.0 750.25,129.1 750.00,129.2 749.75,129.2 749.50,129.3 749.25,129.4 749.00,131.2 748.75,132.7 748.50,132.5 748.25,132.3 748.00,132.1 747.75,129.3 747.50,128.3 747.25,128.2 747.00,128.6 746.75,129.9 746.50,136.1 746.25,138.7 746.00,139.6 745.75,139.6 745.50,139.6 745.25,139.6 745.00,137.8 744.75,132.5 744.50,129.4 744.25,129.1 744.00,129.1 743.75,129.1 743.50,129.2 743.25,129.3 743.00,129.3 742.75,129.4 742.50,131.7 742.25,132.7 742.00,132.5 741.75,132.2 741.50,132.0 741.25,128.6 741.00,128.3 740.75,128.2 740.50,128.8 740.25,131.1 740.00,136.8 739.75,138.7 739.50,139.2 739.25,139.2 739.00,139.2 738.75,139.0 738.50,137.0 738.25,130.9 738.00,129.3 737.75,129.0 737.50,129.1 737.25,129.1 737.00,129.2 736.75,129.3 736.50,129.3 736.25,129.6 736.00,132.2 735.75,132.6 735.50,132.4 735.25,132.2 735.00,131.4 734.75,128.4 734.50,128.3 734.25,128.2 734.00,128.9 733.75,133.4 733.50,140.1 733.25,142.1 733.00,142.2 732.75,142.2 732.50,142.2 732.25,141.6 732.00,139.3 731.75,129.6 731.50,129.3 731.25,129.0 731.00,129.1 730.75,129.1 730.50,129.2 730.25,129.3 730.00,129.4 729.75,130.1 729.50,132.7 729.25,132.6 729.00,132.4 728.75,132.1 728.50,130.7 728.25,128.4 728.00,128.3 727.75,128.4 727.50,129.0 727.25,135.1 727.00,140.5 726.75,142.2 726.50,142.2 726.25,142.2 726.00,142.2 725.75,141.2 725.50,137.4 725.25,129.5 725.00,129.2 724.75,129.0 724.50,129.1 724.25,129.2 724.00,129.2 723.75,129.3 723.50,129.4 723.25,130.6 723.00,132.8 722.75,132.5 722.50,132.3 722.25,132.1 722.00,130.0 721.75,128.3 721.50,128.3 721.25,128.5 721.00,129.1 720.75,134.7 720.50,138.1 720.25,139.4 720.00,139.4 719.75,139.4 719.50,139.4 719.25,138.0 719.00,133.8 718.75,129.5 718.50,129.1 718.25,129.0 718.00,129.1 717.75,129.2 717.50,129.2 717.25,129.3 717.00,129.4 716.75,131.2 716.50,132.7 716.25,132.5 716.00,132.3 715.75,132.1 715.50,129.3 715.25,128.3 715.00,128.2 714.75,128.6 714.50,129.9 714.25,136.1 714.00,138.7 713.75,139.6 713.50,139.6 713.25,139.6 713.00,139.6 712.75,137.8 712.50,132.5 712.25,129.4 712.00,129.1 711.75,129.1 711.50,129.1 711.25,129.2 711.00,129.3 710.75,129.3 710.50,129.4 710.25,131.7 710.00,132.7 709.75,132.5 709.50,132.2 709.25,132.0 709.00,128.6 708.75,128.3 708.50,128.2 708.25,128.8 708.00,131.1 707.75,136.8 707.50,138.7 707.25,139.2 707.00,139.2 706.75,139.2 706.50,139.0 706.25,137.0 706.00,130.9 705.75,129.3 705.50,129.0 705.25,129.1 705.00,129.1 704.75,129.2 704.50,129.3 704.25,129.3 704.00,129.6 703.75,132.2 703.50,132.6 703.25,132.4 703.00,132.2 702.75,131.4 702.50,128.4 702.25,128.3 702.00,128.2 701.75,128.9 701.50,132.5 701.25,137.9 701.00,139.9 700.75,140.0 700.50,140.0 700.25,140.0 700.00,139.4 699.75,137.2 699.50,129.6 699.25,129.3 699.00,129.0 698.75,129.1 698.50,129.1 698.25,129.2 698.00,129.3 697.75,129.4 697.50,130.1 697.25,132.7 697.00,132.6 696.75,132.4 696.50,132.1 696.25,130.7 696.00,128.4 695.75,128.3 695.50,128.4 695.25,129.0 695.00,135.1 694.75,140.5 694.50,142.2 694.25,142.2 694.00,142.2 693.75,142.2 693.50,141.2 693.25,137.4 693.00,129.5 692.75,129.2 692.50,129.0 692.25,129.1 692.00,129.2 691.75,129.2 691.50,129.3 691.25,129.4 691.00,130.6 690.75,132.8 690.50,132.5 690.25,132.3 690.00,132.1 689.75,130.0 689.50,128.3 689.25,128.3 689.00,128.5 688.75,129.1 688.50,135.3 688.25,138.9 688.00,140.2 687.75,140.2 687.50,140.2 687.25,140.2 687.00,138.8 686.75,134.3 686.50,129.5 686.25,129.1 686.00,129.0 685.75,129.1 685.50,129.2 685.25,129.2 685.00,129.3 684.75,129.4 684.50,131.2 684.25,132.7 684.00,132.5 683.75,132.3 683.50,132.1 683.25,129.3 683.00,128.3 682.75,128.2 682.50,128.6 682.25,130.2 682.00,138.3 681.75,141.3 681.50,142.2 681.25,142.2 681.00,142.2 680.75,142.2 680.50,140.4 680.25,133.5 680.00,129.4 679.75,129.1 679.50,129.1 679.25,129.1 679.00,129.2 678.75,129.3 678.50,129.3 678.25,129.4 678.00,131.7 677.75,132.7 677.50,132.5 677.25,132.2 677.00,132.0 676.75,128.6 676.50,128.3 676.25,128.2 676.00,128.8 675.75,131.1 675.50,137.0 675.25,138.9 675.00,139.4 674.75,139.4 674.50,139.4 674.25,139.2 674.00,137.2 673.75,131.0 673.50,129.3 673.25,129.0 673.00,129.1 672.75,129.1 672.50,129.2 672.25,129.3 672.00,129.3 671.75,129.6 671.50,132.2 671.25,132.6 671.00,132.4 670.75,132.2 670.50,131.4 670.25,128.4 670.00,128.3 669.75,128.2 669.50,128.9 669.25,133.4 669.00,140.1 668.75,142.1 668.50,142.2 668.25,142.2 668.00,142.2 667.75,141.6 667.50,139.3 667.25,129.6 667.00,129.3 666.75,129.0 666.50,129.1 666.25,129.1 666.00,129.2 665.75,129.3 665.50,129.4 665.25,130.1 665.00,132.7 664.75,132.6 664.50,132.4 664.25,132.1 664.00,130.7 663.75,128.4 663.50,128.3 663.25,128.4 663.00,129.0 662.75,133.6 662.50,137.9 662.25,139.6 662.00,139.6 661.75,139.6 661.50,139.6 661.25,138.6 661.00,135.4 660.75,129.5 660.50,129.2 660.25,129.0 660.00,129.1 659.75,129.2 659.50,129.2 659.25,129.3 659.00,129.4 658.75,130.6 658.50,132.8 658.25,132.5 658.00,132.3 657.75,132.1 657.50,130.0 657.25,128.3 657.00,128.3 656.75,128.5 656.50,129.1 656.25,135.8 656.00,139.7 655.75,141.0 655.50,141.0 655.25,141.0 655.00,141.0 654.75,139.6 654.50,134.7 654.25,129.5 654.00,129.1 653.75,129.0 653.50,129.1 653.25,129.2 653.00,129.2 652.75,129.3 652.50,129.4 652.25,131.2 652.00,132.7 651.75,132.5 651.50,132.3 651.25,132.1 651.00,129.3 650.75,128.3 650.50,128.2 650.25,128.6 650.00,130.0 649.75,136.6 649.50,139.3 649.25,140.2 649.00,140.2 648.75,140.2 648.50,140.2 648.25,138.4 648.00,132.7 647.75,129.4 647.50,129.1 647.25,129.1 647.00,129.1 646.75,129.2 646.50,129.3 646.25,129.3 646.00,129.4 645.75,131.7 645.50,132.7 645.25,132.5 645.00,132.2 644.75,132.0 644.50,128.6 644.25,128.3 644.00,128.2 643.75,128.8 643.50,131.2 643.25,137.2 643.00,139.1 642.75,139.6 642.50,139.6 642.25,139.6 642.00,139.4 641.75,137.4 641.50,131.0 641.25,129.3 641.00,129.0 640.75,129.1 640.50,129.1 640.25,129.2 640.00,129.3 639.75,129.3 639.50,129.6 639.25,132.2 639.00,132.6 638.75,132.4 638.50,132.2 638.25,131.4 638.00,128.4 637.75,128.3 637.50,128.2 637.25,128.9 637.00,132.5 636.75,137.9 636.50,139.9 636.25,140.0 636.00,140.0 635.75,140.0 635.50,139.4 635.25,137.2 635.00,129.6 634.75,129.3 634.50,129.0 634.25,129.1 634.00,129.1 633.75,129.2 633.50,129.3 633.25,129.4 633.00,130.1 632.75,132.7 632.50,132.6 632.25,132.4 632.00,132.1 631.75,130.7 631.50,128.4 631.25,128.3 631.00,128.4 630.75,129.0 630.50,135.1 630.25,140.5 630.00,142.2 629.75,142.2 629.50,142.2 629.25,142.2 629.00,141.2 628.75,137.4 628.50,129.5 628.25,129.2 628.00,129.0 627.75,129.1 627.50,129.2 627.25,129.2 627.00,129.3 626.75,129.4 626.50,130.6 626.25,132.8 626.00,132.5 625.75,132.3 625.50,132.1 625.25,130.0 625.00,128.3 624.75,128.3 624.50,128.5 624.25,129.1 624.00,134.7 623.75,138.1 623.50,139.4 623.25,139.4 623.00,139.4 622.75,139.4 622.50,138.0 622.25,133.8 622.00,129.5 621.75,129.1 621.50,129.0 621.25,129.1 621.00,129.2 620.75,129.2 620.50,129.3 620.25,129.4 620.00,131.2 619.75,132.7 619.50,132.5 619.25,132.3 619.00,132.1 618.75,129.3 618.50,128.3 618.25,128.2 618.00,128.6 617.75,129.9 617.50,136.1 617.25,138.7 617.00,139.6 616.75,139.6 616.50,139.6 616.25,139.6 616.00,137.8 615.75,132.5 615.50,129.4 615.25,129.1 615.00,129.1 614.75,129.1 614.50,129.2 614.25,129.3 614.00,129.3 613.75,129.4 613.50,131.7 613.25,132.7 613.00,132.5 612.75,132.2 612.50,132.0 612.25,128.6 612.00,128.3 611.75,128.2 611.50,128.8 611.25,131.1 611.00,137.0 610.75,138.9 610.50,139.4 610.25,139.4 610.00,139.4 609.75,139.2 609.50,137.2 609.25,131.0 609.00,129.3 608.75,129.0 608.50,129.1 608.25,129.1 608.00,129.2 607.75,129.3 607.50,129.3 607.25,129.6 607.00,132.2 606.75,132.6 606.50,132.4 606.25,132.2 606.00,131.4 605.75,128.4 605.50,128.3 605.25,128.2 605.00,128.9 604.75,132.9 604.50,138.9 604.25,140.9 604.00,141.0 603.75,141.0 603.50,141.0 603.25,140.4 603.00,138.2 602.75,129.6 602.50,129.3 602.25,129.0 602.00,129.1 601.75,129.1 601.50,129.2 601.25,129.3 601.00,129.4 600.75,130.1 600.50,132.7 600.25,132.6 600.00,132.4 599.75,132.1 599.50,130.7 599.25,128.4 599.00,128.3 598.75,128.4 598.50,129.0 598.25,135.1 598.00,140.5 597.75,142.2 597.50,142.2 597.25,142.2 597.00,142.2 596.75,141.2 596.50,137.4 596.25,129.5 596.00,129.2 595.75,129.0 595.50,129.1 595.25,129.2 595.00,129.2 594.75,129.3 594.50,129.4 594.25,130.6 594.00,132.8 593.75,132.5 593.50,132.3 593.25,132.1 593.00,130.0 592.75,128.3 592.50,128.3 592.25,128.5 592.00,129.1 591.75,136.7 591.50,140.9 591.25,142.2 591.00,142.2 590.75,142.2 590.50,142.2 590.25,140.8 590.00,135.4 589.75,129.5 589.50,129.1 589.25,129.0 589.00,129.1 588.75,129.2 588.50,129.2 588.25,129.3 588.00,129.4 587.75,131.2 587.50,132.7 587.25,132.5 587.00,132.3 586.75,132.1 586.50,129.3 586.25,128.3 586.00,128.2 585.75,128.6 585.50,129.9 585.25,135.9 585.00,138.5 584.75,139.4 584.50,139.4 584.25,139.4 584.00,139.4 583.75,137.6 583.50,132.4 583.25,129.4 583.00,129.1 582.75,129.1 582.50,129.1 582.25,129.2 582.00,129.3 581.75,129.3 581.50,129.4 581.25,131.7 581.00,132.7 580.75,132.5 580.50,132.2 580.25,132.0 580.00,128.6 579.75,128.3 579.50,128.2 579.25,128.8 579.00,131.8 578.75,139.8 578.50,141.7 578.25,142.2 578.00,142.2 577.75,142.2 577.50,142.0 577.25,140.0 577.00,131.5 576.75,129.3 576.50,129.0 576.25,129.1 576.00,129.1 575.75,129.2 575.50,129.3 575.25,129.3 575.00,129.6 574.75,132.2 574.50,132.6 574.25,132.4 574.00,132.2 573.75,131.4 573.50,128.4 573.25,128.3 573.00,128.2 572.75,128.9 572.50,132.2 572.25,137.1 572.00,139.1 571.75,139.2 571.50,139.2 571.25,139.2 571.00,138.6 570.75,136.4 570.50,129.6 570.25,129.3 570.00,129.0 569.75,129.1 569.50,129.1 569.25,129.2 569.00,129.3 568.75,129.4 568.50,130.1 568.25,132.7 568.00,132.6 567.75,132.4 567.50,132.1 567.25,130.7 567.00,128.4 566.75,128.3 566.50,128.4 566.25,129.0 566.00,133.4 565.75,137.5 565.50,139.2 565.25,139.2 565.00,139.2 564.75,139.2 564.50,138.2 564.25,135.1 564.00,129.5 563.75,129.2 563.50,129.0 563.25,129.1 563.00,129.2 562.75,129.2 562.50,129.3 562.25,129.4 562.00,130.6 561.75,132.8 561.50,132.5 561.25,132.3 561.00,132.1 560.75,130.0 560.50,128.3 560.25,128.3 560.00,128.5 559.75,129.1 559.50,134.8 559.25,138.3 559.00,139.6 558.75,139.6 558.50,139.6 558.25,139.6 558.00,138.2 557.75,133.9 557.50,129.5 557.25,129.1 557.00,129.0 556.75,129.1 556.50,129.2 556.25,129.2 556.00,129.3 555.75,129.4 555.50,131.2 555.25,132.7 555.00,132.5 554.75,132.3 554.50,132.1 554.25,129.3 554.00,128.3 553.75,128.2 553.50,128.6 553.25,129.9 553.00,135.9 552.75,138.5 552.50,139.4 552.25,139.4 552.00,139.4 551.75,139.4 551.50,137.6 551.25,132.4 551.00,129.4 550.75,129.1 550.50,129.1 550.25,129.1 550.00,129.2 549.75,129.3 549.50,129.3 549.25,129.4 549.00,131.7 548.75,132.7 548.50,132.5 548.25,132.2 548.00,132.0 547.75,128.6 547.50,128.3 547.25,128.2 547.00,128.8 546.75,131.8 546.50,139.8 546.25,141.7 546.00,142.2 545.75,142.2 545.50,142.2 545.25,142.0 545.00,140.0 544.75,131.5 544.50,129.3 544.25,129.0 544.00,129.1 543.75,129.1 543.50,129.2 543.25,129.3 543.00,129.3 542.75,129.6 542.50,132.2 542.25,132.6 542.00,132.4 541.75,132.2 541.50,131.4 541.25,128.4 541.00,128.3 540.75,128.2 540.50,128.9 540.25,132.5 540.00,137.9 539.75,139.9 539.50,140.0 539.25,140.0 539.00,140.0 538.75,139.4 538.50,137.2 538.25,129.6 538.00,129.3 537.75,129.0 537.50,129.1 537.25,129.1 537.00,129.2 536.75,129.3 536.50,129.4 536.25,130.1 536.00,132.7 535.75,132.6 535.50,132.4 535.25,132.1 535.00,130.7 534.75,128.4 534.50,128.3 534.25,128.4 534.00,129.0 533.75,133.5 533.50,137.7 533.25,139.4 533.00,139.4 532.75,139.4 532.50,139.4 532.25,138.4 532.00,135.2 531.75,129.5 531.50,129.2 531.25,129.0 531.00,129.1 530.75,129.2 530.50,129.2 530.25,129.3 530.00,129.4 529.75,130.6 529.50,132.8 529.25,132.5 529.00,132.3 528.75,132.1 528.50,130.0 528.25,128.3 528.00,128.3 527.75,128.5 527.50,129.1 527.25,135.8 527.00,139.7 526.75,141.0 526.50,141.0 526.25,141.0 526.00,141.0 525.75,139.6 525.50,134.7 525.25,129.5 525.00,129.1 524.75,129.0 524.50,129.1 524.25,129.2 524.00,129.2 523.75,129.3 523.50,129.4 523.25,131.2 523.00,132.7 522.75,132.5 522.50,132.3 522.25,132.1 522.00,129.3 521.75,128.3 521.50,128.2 521.25,128.6 521.00,130.2 520.75,138.3 520.50,141.3 520.25,142.2 520.00,142.2 519.75,142.2 519.50,142.2 519.25,140.4 519.00,133.5 518.75,129.4 518.50,129.1 518.25,129.1 518.00,129.1 517.75,129.2 517.50,129.3 517.25,129.3 517.00,129.4 516.75,131.7 516.50,132.7 516.25,132.5 516.00,132.2 515.75,132.0 515.50,128.6 515.25,128.3 515.00,128.2 514.75,128.8 514.50,131.1 514.25,137.0 514.00,138.9 513.75,139.4 513.50,139.4 513.25,139.4 513.00,139.2 512.75,137.2 512.50,131.0 512.25,129.3 512.00,129.0 511.75,129.1 511.50,129.1 511.25,129.2 511.00,129.3 510.75,129.3 510.50,129.6 510.25,132.2 510.00,132.6 509.75,132.4 509.50,132.2 509.25,131.4 509.00,128.4 508.75,128.3 508.50,128.2 508.25,128.9 508.00,132.4 507.75,137.5 507.50,139.5 507.25,139.6 507.00,139.6 506.75,139.6 506.50,139.0 506.25,136.8 506.00,129.6 505.75,129.3 505.50,129.0 505.25,129.1 505.00,129.1 504.75,129.2 504.50,129.3 504.25,129.4 504.00,130.1 503.75,132.7 503.50,132.6 503.25,132.4 503.00,132.1 502.75,130.7 502.50,128.4 502.25,128.3 502.00,128.4 501.75,129.0 501.50,133.5 501.25,137.7 501.00,139.4 500.75,139.4 500.50,139.4 500.25,139.4 500.00,138.4 499.75,135.2 499.50,129.5 499.25,129.2 499.00,129.0 498.75,129.1 498.50,129.2 498.25,129.2 498.00,129.3 497.75,129.4 497.50,130.6 497.25,132.8 497.00,132.5 496.75,132.3 496.50,132.1 496.25,130.0 496.00,128.3 495.75,128.3 495.50,128.5 495.25,129.1 495.00,135.8 494.75,139.7 494.50,141.0 494.25,141.0 494.00,141.0 493.75,141.0 493.50,139.6 493.25,134.7 493.00,129.5 492.75,129.1 492.50,129.0 492.25,129.1 492.00,129.2 491.75,129.2 491.50,129.3 491.25,129.4 491.00,131.2 490.75,132.7 490.50,132.5 490.25,132.3 490.00,132.1 489.75,129.3 489.50,128.3 489.25,128.2 489.00,128.6 488.75,130.1 488.50,137.3 488.25,140.1 488.00,141.0 487.75,141.0 487.50,141.0 487.25,141.0 487.00,139.2 486.75,133.0 486.50,129.4 486.25,129.1 486.00,129.1 485.75,129.1 485.50,129.2 485.25,129.3 485.00,129.3 484.75,129.4 484.50,131.7 484.25,132.7 484.00,132.5 483.75,132.2 483.50,132.0 483.25,128.6 483.00,128.3 482.75,128.2 482.50,128.8 482.25,131.1 482.00,137.0 481.75,138.9 481.50,139.4 481.25,139.4 481.00,139.4 480.75,139.2 480.50,137.2 480.25,131.0 480.00,129.3 479.75,129.0 479.50,129.1 479.25,129.1 479.00,129.2 478.75,129.3 478.50,129.3 478.25,129.6 478.00,132.2 477.75,132.6 477.50,132.4 477.25,132.2 477.00,131.4 476.75,128.4 476.50,128.3 476.25,128.2 476.00,128.9 475.75,132.3 475.50,137.3 475.25,139.3 475.00,139.4 474.75,139.4 474.50,139.4 474.25,138.8 474.00,136.6 473.75,129.6 473.50,129.3 473.25,129.0 473.00,129.1 472.75,129.1 472.50,129.2 472.25,129.3 472.00,129.4 471.75,130.1 471.50,132.7 471.25,132.6 471.00,132.4 470.75,132.1 470.50,130.7 470.25,128.4 470.00,128.3 469.75,128.4 469.50,129.0 469.25,133.6 469.00,137.9 468.75,139.6 468.50,139.6 468.25,139.6 468.00,139.6 467.75,138.6 467.50,135.4 467.25,129.5 467.00,129.2 466.75,129.0 466.50,129.1 466.25,129.2 466.00,129.2 465.75,129.3 465.50,129.4 465.25,130.6 465.00,132.8 464.75,132.5 464.50,132.3 464.25,132.1 464.00,130.0 463.75,128.3 463.50,128.3 463.25,128.5 463.00,129.1 462.75,136.7 462.50,140.9 462.25,142.2 462.00,142.2 461.75,142.2 461.50,142.2 461.25,140.8 461.00,135.4 460.75,129.5 460.50,129.1 460.25,129.0 460.00,129.1 459.75,129.2 459.50,129.2 459.25,129.3 459.00,129.4 458.75,131.2 458.50,132.7 458.25,132.5 458.00,132.3 457.75,132.1 457.50,129.3 457.25,128.3 457.00,128.2 456.75,128.6 456.50,129.9 456.25,135.9 456.00,138.5 455.75,139.4 455.50,139.4 455.25,139.4 455.00,139.4 454.75,137.6 454.50,132.4 454.25,129.4 454.00,129.1 453.75,129.1 453.50,129.1 453.25,129.2 453.00,129.3 452.75,129.3 452.50,129.4 452.25,131.7 452.00,132.7 451.75,132.5 451.50,132.2 451.25,132.0 451.00,128.6 450.75,128.3 450.50,128.2 450.25,128.8 450.00,131.8 449.75,139.8 449.50,141.7 449.25,142.2 449.00,142.2 448.75,142.2 448.50,142.0 448.25,140.0 448.00,131.5 447.75,129.3 447.50,129.0 447.25,129.1 447.00,129.1 446.75,129.2 446.50,129.3 446.25,129.3 446.00,129.6 445.75,132.2 445.50,132.6 445.25,132.4 445.00,132.2 444.75,131.4 444.50,128.4 444.25,128.3 444.00,128.2 443.75,128.9 443.50,132.6 443.25,138.1 443.00,140.1 442.75,140.2 442.50,140.2 442.25,140.2 442.00,139.6 441.75,137.4 441.50,129.6 441.25,129.3 441.00,129.0 440.75,129.1 440.50,129.1 440.25,129.2 440.00,129.3 439.75,129.4 439.50,130.1 439.25,132.7 439.00,132.6 438.75,132.4 438.50,132.1 438.25,130.7 438.00,128.4 437.75,128.3 437.50,128.4 437.25,129.0 437.00,133.5 436.75,137.7 436.50,139.4 436.25,139.4 436.00,139.4 435.75,139.4 435.50,138.4 435.25,135.2 435.00,129.5 434.75,129.2 434.50,129.0 434.25,129.1 434.00,129.2 433.75,129.2 433.50,129.3 433.25,129.4 433.00,130.6 432.75,132.8 432.50,132.5 432.25,132.3 432.00,132.1 431.75,130.0 431.50,128.3 431.25,128.3 431.00,128.5 430.75,129.1 430.50,136.7 430.25,140.9 430.00,142.2 429.75,142.2 429.50,142.2 429.25,142.2 429.00,140.8 428.75,135.4 428.50,129.5 428.25,129.1 428.00,129.0 427.75,129.1 427.50,129.2 427.25,129.2 427.00,129.3 426.75,129.4 426.50,131.2 426.25,132.7 426.00,132.5 425.75,132.3 425.50,132.1 425.25,129.3 425.00,128.3 424.75,128.2 424.50,128.6 424.25,130.0 424.00,136.4 423.75,139.1 423.50,140.0 423.25,140.0 423.00,140.0 422.75,140.0 422.50,138.2 422.25,132.6 422.00,129.4 421.75,129.1 421.50,129.1 421.25,129.1 421.00,129.2 420.75,129.3 420.50,129.3 420.25,129.4 420.00,131.7 419.75,132.7 419.50,132.5 419.25,132.2 419.00,132.0 418.75,128.6 418.50,128.3 418.25,128.2 418.00,128.8 417.75,131.1 417.50,137.0 417.25,138.9 417.00,139.4 416.75,139.4 416.50,139.4 416.25,139.2 416.00,137.2 415.75,131.0 415.50,129.3 415.25,129.0 415.00,129.1 414.75,129.1 414.50,129.2 414.25,129.3 414.00,129.3 413.75,129.6 413.50,132.2 413.25,132.6 413.00,132.4 412.75,132.2 412.50,131.4 412.25,128.4 412.00,128.3 411.75,128.2 411.50,128.9 411.25,132.3 411.00,137.3 410.75,139.3 410.50,139.4 410.25,139.4 410.00,139.4 409.75,138.8 409.50,136.6 409.25,129.6 409.00,129.3 408.75,129.0 408.50,129.1 408.25,129.1 408.00,129.2 407.75,129.3 407.50,129.4 407.25,130.1 407.00,132.7 406.75,132.6 406.50,132.4 406.25,132.1 406.00,130.7 405.75,128.4 405.50,128.3 405.25,128.4 405.00,129.0 404.75,133.4 404.50,137.5 404.25,139.2 404.00,139.2 403.75,139.2 403.50,139.2 403.25,138.2 403.00,135.1 402.75,129.5 402.50,129.2 402.25,129.0 402.00,129.1 401.75,129.2 401.50,129.2 401.25,129.3 401.00,129.4 400.75,130.6 400.50,132.8 400.25,132.5 400.00,132.3 399.75,132.1 399.50,130.0 399.25,128.3 399.00,128.3 398.75,128.5 398.50,129.1 398.25,135.8 398.00,139.7 397.75,141.0 397.50,141.0 397.25,141.0 397.00,141.0 396.75,139.6 396.50,134.7 396.25,129.5 396.00,129.1 395.75,129.0 395.50,129.1 395.25,129.2 395.00,129.2 394.75,129.3 394.50,129.4 394.25,131.2 394.00,132.7 393.75,132.5 393.50,132.3 393.25,132.1 393.00,129.3 392.75,128.3 392.50,128.2 392.25,128.6 392.00,129.9 391.75,136.1 391.50,138.7 391.25,139.6 391.00,139.6 390.75,139.6 390.50,139.6 390.25,137.8 390.00,132.5 389.75,129.4 389.50,129.1 389.25,129.1 389.00,129.1 388.75,129.2 388.50,129.3 388.25,129.3 388.00,129.4 387.75,131.7 387.50,132.7 387.25,132.5 387.00,132.2 386.75,132.0 386.50,128.6 386.25,128.3 386.00,128.2 385.75,128.8 385.50,131.3 385.25,137.8 385.00,139.7 384.75,140.2 384.50,140.2 384.25,140.2 384.00,140.0 383.75,138.0 383.50,131.1 383.25,129.3 383.00,129.0Z" fill="#a8f1f1" stroke="#a8f1f1" stroke-width="0.5" stroke-linejoin="round"/>
<!-- spectrum -->
<g stroke="rgba(255,255,255,0.245)" stroke-width="1.85">
<line x1="376" x2="769.6" y1="436.2" y2="436.2"/>
<line x1="376" x2="769.6" y1="467.6" y2="467.6"/>
<line x1="376" x2="769.6" y1="499.0" y2="499.0"/>
<line x1="376" x2="769.6" y1="530.4" y2="530.4"/>
<line x1="441.0" x2="441.0" y1="405.7" y2="561"/>
<line x1="506.9" x2="506.9" y1="405.7" y2="561"/>
<line x1="572.7" x2="572.7" y1="405.7" y2="561"/>
<line x1="638.6" x2="638.6" y1="405.7" y2="561"/>
<line x1="704.5" x2="704.5" y1="405.7" y2="561"/>
</g>
<path d="M376.2,561.3 376.2,511.8 376.7,513.8 377.2,515.8 377.7,517.1 378.2,518.8 378.7,520.3 379.2,521.7 379.7,522.7 380.2,521.2 380.7,519.9 381.2,518.6 381.7,513.9 382.2,507.7 382.7,487.8 383.2,469.5 383.7,469.5 384.2,491.7 384.7,507.5 385.2,514.0 385.7,519.1 386.2,515.7 386.7,505.9 387.2,510.4 387.7,521.8 388.2,521.5 388.7,520.6 389.2,518.3 389.7,514.5 390.2,507.6 390.7,481.7 391.2,468.0 391.7,470.1 392.2,498.2 392.7,510.6 393.2,512.9 393.7,513.3 394.2,513.3 394.7,508.6 395.2,512.4 395.7,524.1 396.2,522.0 396.7,518.6 397.2,520.1 397.7,518.2 398.2,511.3 398.7,494.2 399.2,488.5 399.7,493.5 400.2,512.2 400.7,516.4 401.2,518.3 401.7,505.5 402.2,490.1 402.7,497.9 403.2,516.6 403.7,521.1 404.2,521.3 404.7,521.5 405.2,520.2 405.7,515.0 406.2,503.8 406.7,479.7 407.2,476.5 407.7,487.2 408.2,511.4 408.7,516.9 409.2,518.9 409.7,513.9 410.2,513.1 410.7,519.1 411.2,521.2 411.7,521.9 412.2,520.9 412.7,518.9 413.2,517.8 413.7,516.3 414.2,508.4 414.7,493.0 415.2,493.0 415.7,503.4 416.2,517.1 416.7,521.6 417.2,524.7 417.7,526.0 418.2,522.7 418.7,515.1 419.2,515.1 419.7,523.0 420.2,521.2 420.7,519.5 421.2,518.8 421.7,513.0 422.2,494.7 422.7,477.0 423.2,477.0 423.7,498.2 424.2,514.5 424.7,517.8 425.2,522.2 425.7,525.3 426.2,526.1 426.7,517.7 427.2,516.9 427.7,524.2 428.2,528.5 428.7,526.4 429.2,524.0 429.7,521.0 430.2,507.1 430.7,498.5 431.2,499.0 431.7,511.7 432.2,518.2 432.7,523.0 433.2,528.1 433.7,529.4 434.2,528.3 434.7,520.1 435.2,519.1 435.7,523.7 436.2,522.9 436.7,521.7 437.2,521.2 437.7,515.7 438.2,494.7 438.7,487.0 439.2,491.5 439.7,510.4 440.2,517.8 440.7,523.5 441.2,524.7 441.7,524.4 442.2,526.1 442.7,528.3 443.2,531.5 443.7,530.6 444.2,528.0 444.7,529.0 445.2,528.2 445.7,523.1 446.2,516.3 446.7,515.0 447.2,518.5 447.7,526.9 448.2,529.3 448.7,529.3 449.2,527.4 449.7,528.0 450.2,529.4 450.7,531.8 451.2,532.7 451.7,531.9 452.2,529.4 452.7,526.2 453.2,525.3 453.7,521.2 454.2,513.2 454.7,513.0 455.2,518.1 455.7,526.8 456.2,529.6 456.7,529.3 457.2,530.2 457.7,532.6 458.2,533.5 458.7,533.8 459.2,532.5 459.7,530.7 460.2,528.7 460.7,528.3 461.2,528.5 461.7,527.3 462.2,525.0 462.7,525.0 463.2,527.9 463.7,529.5 464.2,530.6 464.7,531.4 465.2,530.0 465.7,529.7 466.2,530.4 466.7,532.2 467.2,533.9 467.7,532.9 468.2,532.7 468.7,533.5 469.2,532.5 469.7,529.0 470.2,527.0 470.7,527.0 471.2,529.6 471.7,531.2 472.2,531.7 472.7,534.0 473.2,535.8 473.7,534.1 474.2,534.1 474.7,536.0 475.2,534.5 475.7,532.2 476.2,530.3 476.7,530.4 477.2,532.8 477.7,530.7 478.2,530.0 478.7,530.2 479.2,532.6 479.7,534.2 480.2,534.5 480.7,533.9 481.2,533.5 481.7,533.5 482.2,535.7 482.7,535.8 483.2,533.8 483.7,532.4 484.2,531.5 484.7,533.1 485.2,532.8 485.7,531.0 486.2,529.6 486.7,528.3 487.2,529.7 487.7,531.8 488.2,535.8 488.7,535.1 489.2,530.5 489.7,531.2 490.2,532.3 490.7,532.9 491.2,534.0 491.7,535.4 492.2,533.8 492.7,531.7 493.2,533.2 493.7,533.0 494.2,531.7 494.7,531.5 495.2,531.9 495.7,532.5 496.2,532.6 496.7,531.6 497.2,531.2 497.7,531.2 498.2,532.6 498.7,534.0 499.2,534.4 499.7,534.4 500.2,534.0 500.7,533.3 501.2,532.3 501.7,530.8 502.2,530.6 502.7,532.5 503.2,534.4 503.7,536.3 504.2,535.2 504.7,534.3 505.2,533.7 505.7,532.5 506.2,530.9 506.7,533.0 507.2,534.9 507.7,534.6 508.2,534.5 508.7,534.6 509.2,534.6 509.7,534.7 510.2,534.3 510.7,534.5 511.2,535.8 511.7,536.2 512.2,536.4 512.7,536.1 513.2,535.5 513.7,534.3 514.2,532.5 514.7,530.3 515.2,531.8 515.7,533.2 516.2,532.5 516.7,533.8 517.2,537.0 517.7,535.8 518.2,533.6 518.7,533.7 519.2,533.5 519.7,533.0 520.2,533.1 520.7,533.6 521.2,537.8 521.7,540.3 522.2,539.1 522.7,537.1 523.2,534.6 523.7,532.5 524.2,531.2 524.7,532.6 525.2,533.0 525.7,532.2 526.2,532.3 526.7,532.6 527.2,532.5 527.7,532.1 528.2,531.6 528.7,533.2 529.2,535.8 529.7,536.4 530.2,537.1 530.7,538.0 531.2,537.0 531.7,534.8 532.2,535.2 532.7,535.4 533.2,533.6 533.7,534.4 534.2,537.9 534.7,538.1 535.2,537.3 535.7,534.9 536.2,534.0 536.7,535.6 537.2,536.9 537.7,538.2 538.2,537.3 538.7,536.8 539.2,537.2 539.7,536.3 540.2,534.4 540.7,532.2 541.2,530.9 541.7,533.4 542.2,535.4 542.7,536.8 543.2,536.7 543.7,536.1 544.2,534.7 544.7,534.5 545.2,536.1 545.7,535.3 546.2,533.4 546.7,534.2 547.2,533.9 547.7,531.3 548.2,533.1 548.7,537.7 549.2,538.3 549.7,538.2 550.2,538.0 550.7,537.8 551.2,537.5 551.7,535.7 552.2,533.8 552.7,534.6 553.2,535.1 553.7,535.3 554.2,534.6 554.7,533.4 555.2,531.9 555.7,532.2 556.2,536.4 556.7,537.7 557.2,537.1 557.7,536.9 558.2,536.8 558.7,537.0 559.2,538.3 559.7,540.7 560.2,540.3 560.7,539.3 561.2,538.7 561.7,538.8 562.2,539.9 562.7,539.2 563.2,537.8 563.7,537.6 564.2,537.4 564.7,537.4 565.2,538.3 565.7,539.9 566.2,537.6 566.7,535.7 567.2,536.8 567.7,535.2 568.2,531.1 568.7,533.0 569.2,536.1 569.7,536.3 570.2,537.2 570.7,539.3 571.2,537.7 571.7,534.4 572.2,538.1 572.7,540.6 573.2,540.5 573.7,539.2 574.2,537.0 574.7,539.2 575.2,540.7 575.7,538.1 576.2,536.7 576.7,536.3 577.2,533.4 577.7,530.8 578.2,537.1 578.7,539.9 579.2,537.1 579.7,536.1 580.2,535.8 580.7,539.0 581.2,541.0 581.7,540.5 582.2,540.5 582.7,541.0 583.2,541.0 583.7,540.4 584.2,537.6 584.7,537.1 585.2,538.9 585.7,537.3 586.2,535.3 586.7,536.7 587.2,537.5 587.7,537.0 588.2,538.9 588.7,541.7 589.2,540.4 589.7,539.4 590.2,539.0 590.7,537.9 591.2,536.3 591.7,536.3 592.2,536.7 592.7,537.9 593.2,539.4 593.7,541.1 594.2,540.6 594.7,539.4 595.2,537.2 595.7,535.8 596.2,535.9 596.7,536.4 597.2,537.1 597.7,539.7 598.2,540.9 598.7,539.0 599.2,538.5 599.7,539.0 600.2,538.4 600.7,537.1 601.2,533.7 601.7,534.1 602.2,538.2 602.7,540.2 603.2,541.3 603.7,538.9 604.2,537.7 604.7,538.2 605.2,540.0 605.7,542.3 606.2,542.0 606.7,539.9 607.2,533.8 607.7,534.1 608.2,538.6 608.7,537.3 609.2,536.5 609.7,540.3 610.2,542.1 610.7,541.8 611.2,540.4 611.7,538.8 612.2,539.2 612.7,540.2 613.2,541.9 613.7,541.6 614.2,540.4 614.7,539.7 615.2,538.6 615.7,536.9 616.2,536.7 616.7,537.5 617.2,539.2 617.7,540.1 618.2,538.0 618.7,538.0 619.2,540.1 619.7,538.8 620.2,536.8 620.7,536.1 621.2,536.2 621.7,537.3 622.2,537.1 622.7,536.2 623.2,538.1 623.7,540.1 624.2,542.5 624.7,541.5 625.2,538.2 625.7,540.5 626.2,542.4 626.7,539.7 627.2,537.5 627.7,535.7 628.2,536.7 628.7,538.3 629.2,541.1 629.7,541.3 630.2,537.6 630.7,537.7 631.2,539.3 631.7,538.4 632.2,538.4 632.7,540.6 633.2,540.2 633.7,538.0 634.2,539.6 634.7,540.8 635.2,538.9 635.7,538.1 636.2,538.4 636.7,539.8 637.2,541.1 637.7,540.0 638.2,540.2 638.7,542.4 639.2,541.4 639.7,539.1 640.2,541.5 640.7,542.1 641.2,538.3 641.7,535.8 642.2,534.2 642.7,538.0 643.2,541.9 643.7,543.7 644.2,544.1 644.7,543.1 645.2,540.0 645.7,536.8 646.2,538.2 646.7,539.0 647.2,538.8 647.7,537.8 648.2,536.4 648.7,537.8 649.2,539.1 649.7,539.8 650.2,539.7 650.7,538.9 651.2,540.6 651.7,541.5 652.2,538.3 652.7,537.3 653.2,538.7 653.7,538.3 654.2,537.9 654.7,540.8 655.2,540.6 655.7,535.8 656.2,535.2 656.7,536.5 657.2,533.6 657.7,533.2 658.2,539.1 658.7,540.4 659.2,538.8 659.7,540.9 660.2,542.3 660.7,539.4 661.2,538.1 661.7,538.3 662.2,537.3 662.7,536.5 663.2,540.3 663.7,542.6 664.2,542.7 664.7,539.1 665.2,534.0 665.7,540.2 666.2,543.5 666.7,540.3 667.2,540.2 667.7,542.3 668.2,542.0 668.7,541.6 669.2,541.7 669.7,541.2 670.2,540.3 670.7,539.2 671.2,538.3 671.7,540.2 672.2,539.3 672.7,534.1 673.2,534.1 673.7,536.3 674.2,536.4 674.7,538.0 675.2,542.9 675.7,541.9 676.2,536.8 676.7,535.4 677.2,535.0 677.7,536.5 678.2,538.1 678.7,539.6 679.2,540.4 679.7,540.8 680.2,540.4 680.7,540.5 681.2,541.2 681.7,540.6 682.2,539.5 682.7,540.2 683.2,540.0 683.7,538.0 684.2,536.9 684.7,536.5 685.2,538.0 685.7,539.3 686.2,538.5 686.7,538.8 687.2,540.1 687.7,540.1 688.2,539.7 688.7,538.6 689.2,538.7 689.7,540.5 690.2,538.8 690.7,535.5 691.2,535.8 691.7,537.0 692.2,540.5 692.7,541.8 693.2,541.6 693.7,541.4 694.2,540.6 694.7,538.1 695.2,538.3 695.7,541.1 696.2,538.5 696.7,535.1 697.2,536.6 697.7,537.3 698.2,536.6 698.7,537.5 699.2,539.1 699.7,537.4 700.2,535.7 700.7,533.6 701.2,534.3 701.7,536.7 702.2,538.8 702.7,539.7 703.2,536.7 703.7,534.7 704.2,533.8 704.7,534.4 705.2,535.6 705.7,538.1 706.2,538.9 706.7,537.2 707.2,538.6 707.7,541.3 708.2,539.7 708.7,538.4 709.2,537.8 709.7,539.0 710.2,541.3 710.7,538.6 711.2,536.0 711.7,536.0 712.2,536.4 712.7,537.2 713.2,537.4 713.7,537.4 714.2,537.6 714.7,537.0 715.2,535.2 715.7,536.4 716.2,539.0 716.7,536.7 717.2,535.4 717.7,536.6 718.2,536.5 718.7,535.6 719.2,536.9 719.7,538.0 720.2,537.4 720.7,538.4 721.2,540.7 721.7,538.4 722.2,535.8 722.7,540.4 723.2,541.9 723.7,538.5 724.2,538.0 724.7,538.7 725.2,536.9 725.7,535.6 726.2,535.9 726.7,537.5 727.2,540.1 727.7,537.9 728.2,535.9 728.7,536.8 729.2,537.2 729.7,537.1 730.2,536.6 730.7,536.4 731.2,539.1 731.7,539.0 732.2,534.9 732.7,535.4 733.2,537.9 733.7,538.1 734.2,538.0 734.7,537.0 735.2,537.3 735.7,538.4 736.2,538.8 736.7,538.9 737.2,538.0 737.7,536.8 738.2,535.4 738.7,537.3 739.2,539.7 739.7,538.5 740.2,537.7 740.7,537.8 741.2,535.4 741.7,531.9 742.2,533.1 742.7,534.4 743.2,536.1 743.7,537.9 744.2,539.8 744.7,537.4 745.2,535.3 745.7,536.6 746.2,537.6 746.7,538.2 747.2,540.3 747.7,542.4 748.2,541.9 748.7,541.5 749.2,541.4 749.7,539.1 750.2,535.9 750.7,539.0 751.2,539.6 751.7,534.5 752.2,535.4 752.7,539.8 753.2,539.5 753.7,534.6 754.2,529.9 754.7,531.5 755.2,535.1 755.7,536.7 756.2,537.8 756.7,536.2 757.2,535.3 757.7,535.9 758.2,538.7 758.7,542.6 759.2,541.4 759.7,539.5 760.2,536.0 760.7,536.9 761.2,540.8 761.7,540.1 762.2,538.8 762.7,536.9 763.2,537.5 763.7,540.7 764.2,539.4 764.7,537.3 765.2,539.6 765.7,540.4 766.2,538.8 766.7,539.3 767.2,540.5 767.7,539.1 768.2,538.9 768.7,541.3 769.2,541.5 769.7,540.2 769.7,561.3Z" fill="#b4fbfb"/>
<rect x="386" y="412" width="31.5" height="166" fill="rgba(0,0,0,0.09)"/>
<g transform="translate(397.5,148.7)"><rect x="0.5" y="0.5" width="23" height="23" rx="4" fill="rgba(255,255,255,0.03)" stroke="rgba(255,255,255,0.17)" stroke-width="1"/><path d="M5 5 V19 H19 V5" stroke="rgba(255,255,255,0.2)" fill="none"/><path d="M7 6.5 Q9 4.5 11 6.5 T15 6.5 T18 6.5" stroke="rgba(255,255,255,0.2)" fill="none"/></g>
<g transform="translate(397.5,180.7)"><rect x="0.5" y="0.5" width="23" height="23" rx="4" fill="rgba(255,255,255,0.03)" stroke="rgba(255,255,255,0.17)" stroke-width="1"/><path d="M12 5 V19 M5 12 H19" stroke="rgba(255,255,255,0.2)" fill="none" stroke-width="1.6"/></g>
<g transform="translate(397.5,212.7)"><rect x="0.5" y="0.5" width="23" height="23" rx="4" fill="rgba(255,255,255,0.03)" stroke="rgba(255,255,255,0.17)" stroke-width="1"/><path d="M5 12 H19" stroke="rgba(255,255,255,0.2)" fill="none" stroke-width="1.6"/></g>
<g transform="translate(397.5,244.7)"><rect x="0.5" y="0.5" width="23" height="23" rx="4" fill="rgba(255,255,255,0.03)" stroke="rgba(255,255,255,0.17)" stroke-width="1"/><path d="M4 8 L10 12 L4 16Z M20 8 L14 12 L20 16Z" fill="rgba(255,255,255,0.17)"/><path d="M12 4 V20" stroke="rgba(255,255,255,0.2)" fill="none" stroke-dasharray="1.5 2.5"/></g>
<g transform="translate(397.5,276.7)"><rect x="0.5" y="0.5" width="23" height="23" rx="4" fill="rgba(255,255,255,0.03)" stroke="rgba(255,255,255,0.17)" stroke-width="1"/><path d="M7 6 H17 M12 6 V18 M5 19 H19" stroke="rgba(255,255,255,0.2)" fill="none"/></g>
<g transform="translate(391,419.5)"><rect x="0.5" y="0.5" width="23" height="23" rx="4" fill="rgba(255,255,255,0.03)" stroke="rgba(255,255,255,0.17)" stroke-width="1"/><path d="M5 11 L8 16 L14 4" stroke="rgba(255,255,255,0.2)" fill="none" stroke-width="1.5"/><path d="M18 5 V19 H7" stroke="rgba(255,255,255,0.2)" fill="none" stroke-dasharray="1 2.5"/></g>
<g transform="translate(391,451.5)"><rect x="0.5" y="0.5" width="23" height="23" rx="4" fill="rgba(255,255,255,0.03)" stroke="rgba(255,255,255,0.17)" stroke-width="1"/><path d="M5 5 V19 H19" stroke="rgba(255,255,255,0.2)" fill="none"/><path d="M6 9 Q8 6 10 8.5 T14 8.5 T18 8" stroke="rgba(255,255,255,0.2)" fill="none"/></g>
<g transform="translate(391,483.5)"><rect x="0.5" y="0.5" width="23" height="23" rx="4" fill="rgba(255,255,255,0.03)" stroke="rgba(255,255,255,0.17)" stroke-width="1"/><path d="M4 12 H20 M12 6 V18" stroke="rgba(255,255,255,0.2)" fill="none"/></g>
<g transform="translate(391,515.5)"><rect x="0.5" y="0.5" width="23" height="23" rx="4" fill="rgba(255,255,255,0.03)" stroke="rgba(255,255,255,0.17)" stroke-width="1"/><path d="M5 12 H19" stroke="rgba(255,255,255,0.2)" fill="none"/></g>
<g transform="translate(391,547.5)"><rect x="0.5" y="0.5" width="23" height="23" rx="4" fill="rgba(255,255,255,0.03)" stroke="rgba(255,255,255,0.17)" stroke-width="1"/><path d="M4 8 L10 12 L4 16Z M20 8 L14 12 L20 16Z" fill="rgba(255,255,255,0.17)"/></g>
<!-- resize grip -->
<g fill="#555">
<rect x="790.2" y="613.3" width="2" height="2"/>
<rect x="786.3" y="617.3" width="2" height="2"/><rect x="790.2" y="617.3" width="2" height="2"/>
<rect x="782.4" y="621.4" width="2" height="2"/><rect x="786.3" y="621.4" width="2" height="2"/><rect x="790.2" y="621.4" width="2" height="2"/>
</g>
</svg>
</div>
</body></html>
